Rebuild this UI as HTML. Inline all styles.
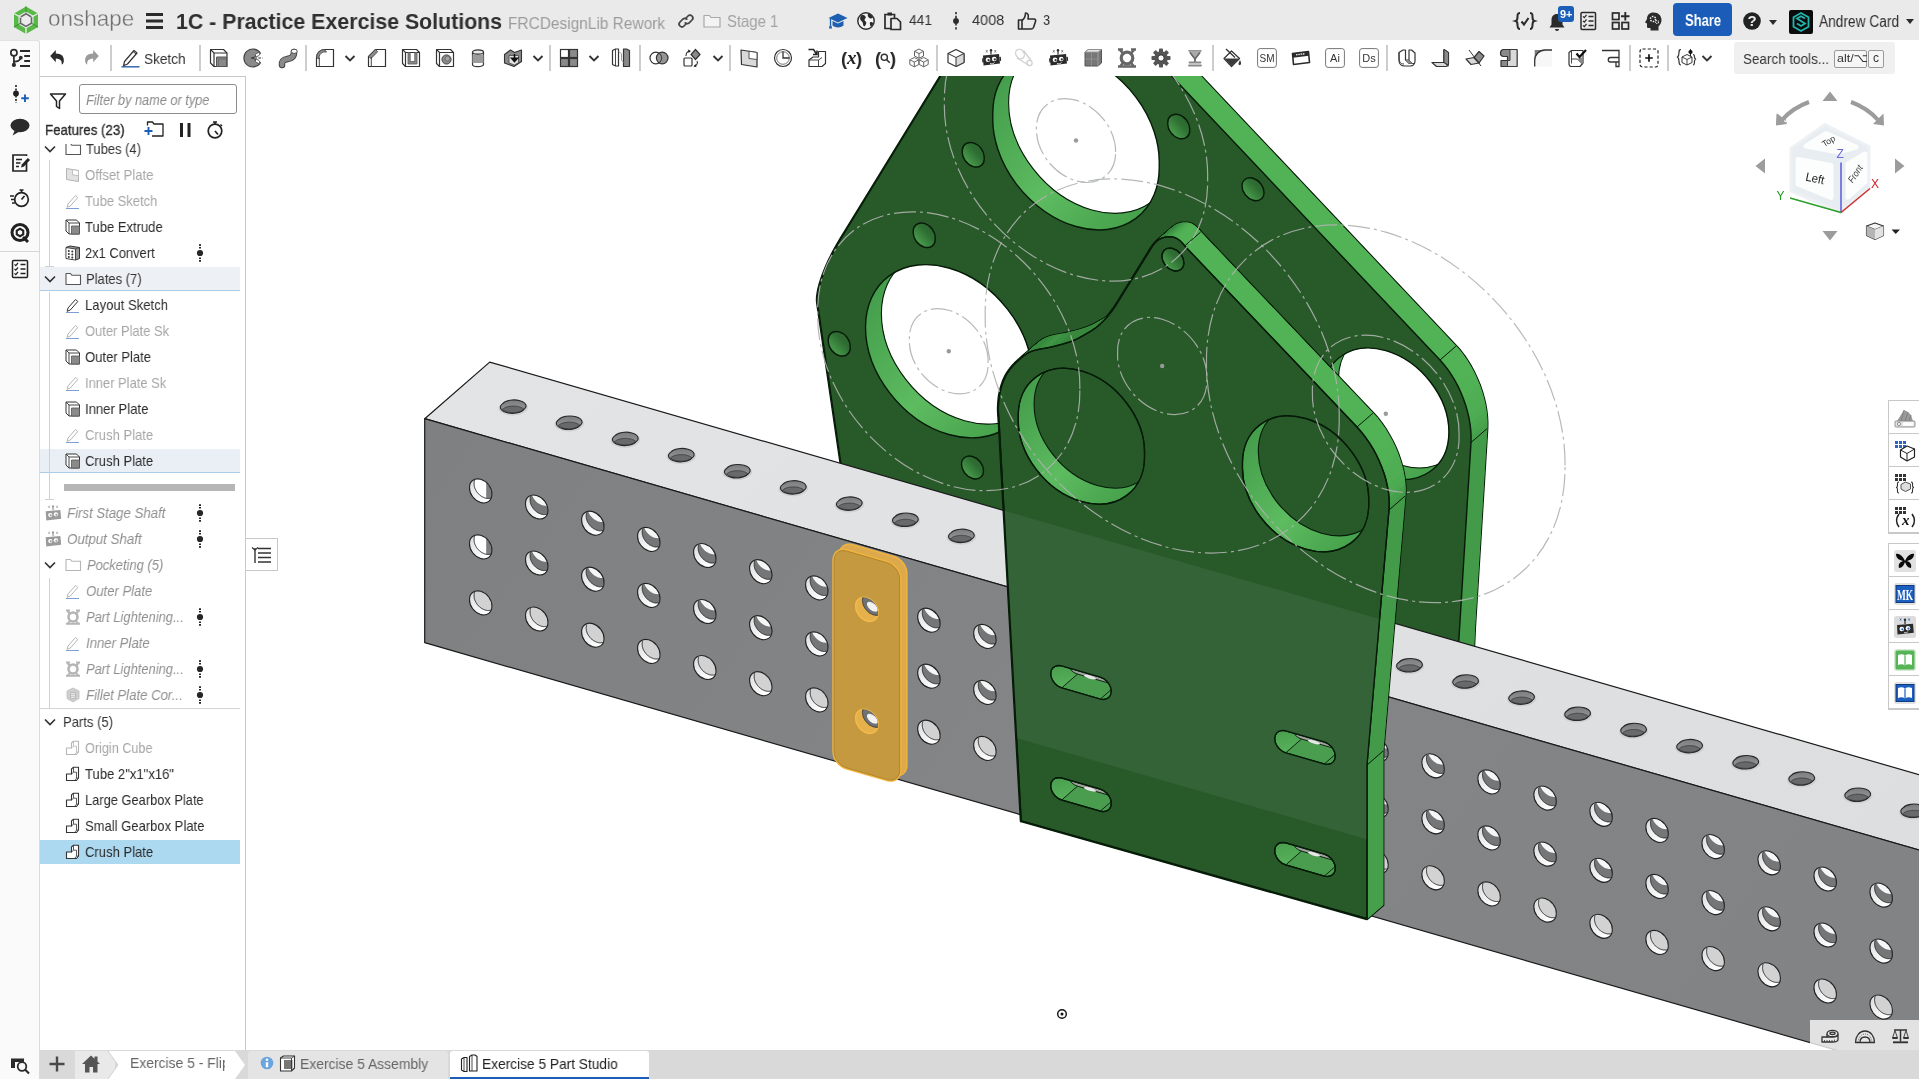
<!DOCTYPE html>
<html lang="en"><head><meta charset="utf-8"><title>Onshape - 1C - Practice Exercise Solutions</title>
<style>
*{box-sizing:border-box;margin:0;padding:0}
html,body{width:1919px;height:1079px;overflow:hidden;background:#fff;font-family:"Liberation Sans",sans-serif;color:#333}
#scene{position:absolute;left:0;top:0;z-index:1}
.abs{position:absolute}
#hdr{position:absolute;left:0;top:0;width:1919px;height:40px;background:#eaeaea;z-index:5}
#tb{position:absolute;left:40px;top:40px;width:1879px;height:36px;background:#fff;z-index:5}
#lcol{position:absolute;left:0;top:40px;width:40px;height:1039px;background:#fafafa;z-index:6;border-top-right-radius:3px;box-shadow:inset -1px 0 0 #dadada, inset 0 1px 0 #e2e2e2}
#panel{position:absolute;left:40px;top:76px;width:206px;height:974px;background:#fff;border-right:1px solid #c9c9c9;box-shadow:inset 0 1px 0 #c9c9c9;z-index:5}
#tabs{position:absolute;left:40px;top:1050px;width:1879px;height:29px;background:#d9d9d9;z-index:7}
.t{position:absolute;white-space:nowrap;line-height:1;transform-origin:0 50%;will-change:transform}
.row{position:absolute;left:0;width:200px;height:26px}
.row .t{top:6px;font-size:14.5px}
.g{color:#a3a3a3}
.i{font-style:italic;color:#8f8f8f}
svg{overflow:visible}
svg.abs{will-change:transform}
.ic{position:absolute;width:24px;height:24px}
</style></head><body>
<svg id="scene" width="1919" height="1079" viewBox="0 0 1919 1079">
<defs>
<linearGradient id="gw" x1="0" y1="0" x2="1" y2="1"><stop offset="0" stop-color="#3f9747"/><stop offset="0.55" stop-color="#5dbb60"/><stop offset="1" stop-color="#3f9a45"/></linearGradient>
<linearGradient id="gh" x1="0" y1="1" x2="1" y2="0"><stop offset="0" stop-color="#56b358"/><stop offset="0.6" stop-color="#2f6f33"/><stop offset="1" stop-color="#2a5e2c"/></linearGradient>
<linearGradient id="hw" x1="0" y1="0" x2="0.6" y2="1"><stop offset="0" stop-color="#d9d9d9"/><stop offset="1" stop-color="#ffffff"/></linearGradient>
<linearGradient id="th" x1="0" y1="0" x2="0" y2="1"><stop offset="0" stop-color="#7b7d7e"/><stop offset="1" stop-color="#9a9c9d"/></linearGradient>
<linearGradient id="tf" x1="0" y1="0" x2="1" y2="0.3"><stop offset="0" stop-color="#7e8081"/><stop offset="0.5" stop-color="#838586"/><stop offset="1" stop-color="#818384"/></linearGradient>
<linearGradient id="tt" x1="0" y1="0" x2="1" y2="0.3"><stop offset="0" stop-color="#e3e4e5"/><stop offset="1" stop-color="#dddedf"/></linearGradient>
<clipPath id="bp_h0"><path d="M1159.2,164.5 A96.11 72.08 -130.93 1 0 992.8,116.5 A96.11 72.08 -130.93 1 0 1159.2,164.5Z"/></clipPath>
<clipPath id="bp_h1"><path d="M1032.0,375.3 A96.11 72.08 -130.93 1 0 865.5,327.2 A96.11 72.08 -130.93 1 0 1032.0,375.3Z"/></clipPath>
<clipPath id="bp_h2"><path d="M1448.9,432.0 A72.89 54.67 -130.93 1 0 1322.6,395.5 A72.89 54.67 -130.93 1 0 1448.9,432.0Z"/></clipPath>
<g id="hA"><path d="M11.2,3.2 A12.94 9.70 -130.93 1 0 -11.2,-3.2 A12.94 9.70 -130.93 1 0 11.2,3.2Z" fill="url(#hw)"/><path d="M11.2 3.2 11.2 4.2 11.0 5.1 10.8 6.0 10.5 6.9 10.4 7.2 10.2 7.3 9.3 7.5 8.4 7.6 7.5 7.6 6.5 7.6 5.5 7.4 4.6 7.2 3.6 6.8 2.6 6.4 1.7 5.9 0.7 5.4 -0.2 4.7 -1.0 4.0 -1.9 3.3 -2.6 2.5 -3.4 1.6 -4.0 0.7 -4.6 -0.3 -5.1 -1.2 -5.6 -2.2 -6.0 -3.2 -6.3 -4.3 -6.5 -5.3 -6.6 -6.3 -6.6 -7.3 -6.6 -8.2 -6.5 -9.2 -6.3 -10.1 -6.0 -10.9 -5.8 -11.2 -5.6 -11.3 -4.7 -11.5 -3.8 -11.6 -2.9 -11.7 -1.9 -11.6 -1.0 -11.4 0.0 -11.2 1.0 -10.9 1.9 -10.5 2.9 -10.0 3.8 -9.4 4.7 -8.8 5.6 -8.1 6.4 -7.3 7.2 -6.5 7.9 -5.6 8.6 -4.7 9.2 -3.8 9.7 -2.8 10.2 -1.8 10.5 -0.8 10.8 0.2 11.0 1.2 11.2 2.2Z" fill="#747677"/><path d="M1.0 -10.9 1.9 -10.5 2.9 -10.0 3.8 -9.4 4.7 -8.8 5.6 -8.1 6.4 -7.3 7.2 -6.5 7.9 -5.6 8.6 -4.7 9.2 -3.8 9.7 -2.8 10.2 -1.8 10.3 -1.4 9.6 -1.3 8.7 -1.2 7.7 -1.3 6.8 -1.5 5.8 -1.7 4.8 -2.0 3.9 -2.4 2.9 -2.9 2.0 -3.5 1.1 -4.1 0.2 -4.8 -0.6 -5.6 -1.4 -6.4 -2.1 -7.3 -2.8 -8.2 -3.4 -9.1 -3.9 -10.1 -4.4 -11.1 -4.5 -11.5 -3.8 -11.6 -2.9 -11.7 -1.9 -11.6 -1.0 -11.4 0.0 -11.2Z" fill="#f6f6f6"/><path d="M10.2 7.3 9.7 7.4 9.3 7.5 8.9 7.5 8.4 7.6 7.9 7.6 7.5 7.6 7.0 7.6 6.5 7.6 6.0 7.5 5.5 7.4 5.1 7.3 4.6 7.2 4.1 7.0 3.6 6.8 3.1 6.6 2.6 6.4 2.1 6.2 1.7 5.9 1.2 5.7 0.7 5.4 0.3 5.1 -0.2 4.7 -0.6 4.4 -1.0 4.0 -1.5 3.7 -1.9 3.3 -2.3 2.9 -2.6 2.5 -3.0 2.0 -3.4 1.6 -3.7 1.1 -4.0 0.7 -4.3 0.2 -4.6 -0.3 -4.9 -0.7 -5.1 -1.2 -5.4 -1.7 -5.6 -2.2 -5.8 -2.7 -6.0 -3.2 -6.1 -3.8 -6.3 -4.3 -6.4 -4.8 -6.5 -5.3 -6.5 -5.8 -6.6 -6.3 -6.6 -6.8 -6.6 -7.3 -6.6 -7.8 -6.6 -8.2 -6.5 -8.7 -6.5 -9.2 -6.4 -9.6 -6.3 -10.1 -6.1 -10.5 -6.0 -10.9" fill="none" stroke="#2a2a2a" stroke-width="1"/><path d="M11.2,3.2 A12.94 9.70 -130.93 1 0 -11.2,-3.2 A12.94 9.70 -130.93 1 0 11.2,3.2Z" fill="none" stroke="#222" stroke-width="1.1"/></g>
<g id="hB"><path d="M11.2,3.2 A12.94 9.70 -130.93 1 0 -11.2,-3.2 A12.94 9.70 -130.93 1 0 11.2,3.2Z" fill="url(#hw)"/><path d="M11.2 3.2 11.2 4.2 11.0 5.1 10.8 6.0 10.5 6.9 10.4 7.2 10.2 7.3 9.3 7.5 8.4 7.6 7.5 7.6 6.5 7.6 5.5 7.4 4.6 7.2 3.6 6.8 2.6 6.4 1.7 5.9 0.7 5.4 -0.2 4.7 -1.0 4.0 -1.9 3.3 -2.6 2.5 -3.4 1.6 -4.0 0.7 -4.6 -0.3 -5.1 -1.2 -5.6 -2.2 -6.0 -3.2 -6.3 -4.3 -6.5 -5.3 -6.6 -6.3 -6.6 -7.3 -6.6 -8.2 -6.5 -9.2 -6.3 -10.1 -6.0 -10.9 -5.8 -11.2 -5.6 -11.3 -4.7 -11.5 -3.8 -11.6 -2.9 -11.7 -1.9 -11.6 -1.0 -11.4 0.0 -11.2 1.0 -10.9 1.9 -10.5 2.9 -10.0 3.8 -9.4 4.7 -8.8 5.6 -8.1 6.4 -7.3 7.2 -6.5 7.9 -5.6 8.6 -4.7 9.2 -3.8 9.7 -2.8 10.2 -1.8 10.5 -0.8 10.8 0.2 11.0 1.2 11.2 2.2Z" fill="#d2d2d2"/><path d="M10.2 7.3 9.7 7.4 9.3 7.5 8.9 7.5 8.4 7.6 7.9 7.6 7.5 7.6 7.0 7.6 6.5 7.6 6.0 7.5 5.5 7.4 5.1 7.3 4.6 7.2 4.1 7.0 3.6 6.8 3.1 6.6 2.6 6.4 2.1 6.2 1.7 5.9 1.2 5.7 0.7 5.4 0.3 5.1 -0.2 4.7 -0.6 4.4 -1.0 4.0 -1.5 3.7 -1.9 3.3 -2.3 2.9 -2.6 2.5 -3.0 2.0 -3.4 1.6 -3.7 1.1 -4.0 0.7 -4.3 0.2 -4.6 -0.3 -4.9 -0.7 -5.1 -1.2 -5.4 -1.7 -5.6 -2.2 -5.8 -2.7 -6.0 -3.2 -6.1 -3.8 -6.3 -4.3 -6.4 -4.8 -6.5 -5.3 -6.5 -5.8 -6.6 -6.3 -6.6 -6.8 -6.6 -7.3 -6.6 -7.8 -6.6 -8.2 -6.5 -8.7 -6.5 -9.2 -6.4 -9.6 -6.3 -10.1 -6.1 -10.5 -6.0 -10.9" fill="none" stroke="#2a2a2a" stroke-width="1"/><path d="M11.2,3.2 A12.94 9.70 -130.93 1 0 -11.2,-3.2 A12.94 9.70 -130.93 1 0 11.2,3.2Z" fill="none" stroke="#222" stroke-width="1.1"/></g>
<g id="hC"><path d="M11.2,3.2 A12.94 9.70 -130.93 1 0 -11.2,-3.2 A12.94 9.70 -130.93 1 0 11.2,3.2Z" fill="url(#hw)"/><path d="M11.2 3.2 11.2 4.2 11.0 5.1 10.8 6.0 10.5 6.9 10.4 7.2 10.2 7.3 9.3 7.5 8.4 7.6 7.5 7.6 6.5 7.6 5.5 7.4 4.6 7.2 3.6 6.8 2.6 6.4 1.7 5.9 0.7 5.4 -0.2 4.7 -1.0 4.0 -1.9 3.3 -2.6 2.5 -3.4 1.6 -4.0 0.7 -4.6 -0.3 -5.1 -1.2 -5.6 -2.2 -6.0 -3.2 -6.3 -4.3 -6.5 -5.3 -6.6 -6.3 -6.6 -7.3 -6.6 -8.2 -6.5 -9.2 -6.3 -10.1 -6.0 -10.9 -5.8 -11.2 -5.6 -11.3 -4.7 -11.5 -3.8 -11.6 -2.9 -11.7 -1.9 -11.6 -1.0 -11.4 0.0 -11.2 1.0 -10.9 1.9 -10.5 2.9 -10.0 3.8 -9.4 4.7 -8.8 5.6 -8.1 6.4 -7.3 7.2 -6.5 7.9 -5.6 8.6 -4.7 9.2 -3.8 9.7 -2.8 10.2 -1.8 10.5 -0.8 10.8 0.2 11.0 1.2 11.2 2.2Z" fill="#ffffff"/><path d="M10.5 6.9 10.4 7.2 10.2 7.3 9.3 7.5 8.4 7.6 7.5 7.6 6.5 7.6 5.5 7.4 5.5 7.4 5.5 -8.2 5.6 -8.1 6.4 -7.3 7.2 -6.5 7.9 -5.6 8.6 -4.7 9.2 -3.8 9.7 -2.8 10.2 -1.8 10.5 -0.8 10.8 0.2 11.0 1.2 11.2 2.2 11.2 3.2 11.2 4.2 11.0 5.1 10.8 6.0Z" fill="#7b7d7e"/><path d="M10.2 7.3 9.7 7.4 9.3 7.5 8.9 7.5 8.4 7.6 7.9 7.6 7.5 7.6 7.0 7.6 6.5 7.6 6.0 7.5 5.5 7.4 5.1 7.3 4.6 7.2 4.1 7.0 3.6 6.8 3.1 6.6 2.6 6.4 2.1 6.2 1.7 5.9 1.2 5.7 0.7 5.4 0.3 5.1 -0.2 4.7 -0.6 4.4 -1.0 4.0 -1.5 3.7 -1.9 3.3 -2.3 2.9 -2.6 2.5 -3.0 2.0 -3.4 1.6 -3.7 1.1 -4.0 0.7 -4.3 0.2 -4.6 -0.3 -4.9 -0.7 -5.1 -1.2 -5.4 -1.7 -5.6 -2.2 -5.8 -2.7 -6.0 -3.2 -6.1 -3.8 -6.3 -4.3 -6.4 -4.8 -6.5 -5.3 -6.5 -5.8 -6.6 -6.3 -6.6 -6.8 -6.6 -7.3 -6.6 -7.8 -6.6 -8.2 -6.5 -8.7 -6.5 -9.2 -6.4 -9.6 -6.3 -10.1 -6.1 -10.5 -6.0 -10.9" fill="none" stroke="#2a2a2a" stroke-width="1"/><path d="M11.2,3.2 A12.94 9.70 -130.93 1 0 -11.2,-3.2 A12.94 9.70 -130.93 1 0 11.2,3.2Z" fill="none" stroke="#222" stroke-width="1.1"/></g>
<g id="hT"><path d="M12.4,3.6 A14.38 7.24 179.75 1 0 -12.4,-3.6 A14.38 7.24 179.75 1 0 12.4,3.6Z" fill="#cfd0d1" transform="translate(0,1.2)"/><path d="M10.5,3.0 A12.18 6.13 179.75 1 0 -10.5,-3.0 A12.18 6.13 179.75 1 0 10.5,3.0Z" fill="url(#th)"/><path d="M-7.8 0.9 -8.6 1.3 -9.3 1.7 -10.0 2.1 -10.5 2.6 -10.8 2.8 -10.6 3.1 -10.0 3.5 -9.3 4.0 -8.6 4.4 -7.8 4.7 -7.0 5.0 -6.1 5.3 -5.2 5.6 -4.2 5.8 -3.2 5.9 -2.1 6.0 -1.1 6.1 -0.0 6.1 1.0 6.1 2.1 6.0 3.1 5.9 4.1 5.7 5.1 5.5 6.1 5.3 7.0 5.0 7.8 4.7 8.6 4.3 9.3 3.9 10.0 3.5 10.5 3.0 10.8 2.8 10.6 2.5 10.0 2.1 9.3 1.6 8.6 1.2 7.8 0.9 7.0 0.6 6.1 0.3 5.2 0.0 4.2 -0.2 3.2 -0.3 2.1 -0.4 1.1 -0.5 0.0 -0.5 -1.0 -0.5 -2.1 -0.4 -3.1 -0.3 -4.1 -0.1 -5.1 0.1 -6.1 0.3 -7.0 0.6Z" fill="#67696a" stroke="#3a3a3a" stroke-width="0.8"/><path d="M10.5,3.0 A12.18 6.13 179.75 1 0 -10.5,-3.0 A12.18 6.13 179.75 1 0 10.5,3.0Z" fill="none" stroke="#2a2a2a" stroke-width="1.1"/></g>
<clipPath id="ch0"><path d="M878.1,612.5 A12.94 9.70 -130.93 1 0 855.7,606.1 A12.94 9.70 -130.93 1 0 878.1,612.5Z"/></clipPath>
<clipPath id="ch2"><path d="M878.1,724.5 A12.94 9.70 -130.93 1 0 855.7,718.1 A12.94 9.70 -130.93 1 0 878.1,724.5Z"/></clipPath>
<clipPath id="sp_h0"><path d="M1144.5,454.4 A72.89 54.67 -130.93 1 0 1018.3,418.0 A72.89 54.67 -130.93 1 0 1144.5,454.4Z"/></clipPath>
<clipPath id="sp_h1"><path d="M1368.7,502.0 A72.89 54.67 -130.93 1 0 1242.5,465.6 A72.89 54.67 -130.93 1 0 1368.7,502.0Z"/></clipPath>
<linearGradient id="sg" x1="0" y1="0" x2="0.3" y2="1"><stop offset="0" stop-color="#469a4b"/><stop offset="1" stop-color="#5cb85f"/></linearGradient>
<clipPath id="sl0"><path d="M1100.3,677.1 L1103.7,678.6 L1106.8,681.1 L1109.2,684.2 L1110.8,687.7 L1111.3,691.2 L1110.8,694.5 L1109.2,697.1 L1106.8,698.8 L1103.7,699.5 L1100.3,699.1 L1061.7,687.9 L1058.3,686.4 L1055.2,683.9 L1052.8,680.8 L1051.2,677.3 L1050.7,673.8 L1051.2,670.5 L1052.8,667.9 L1055.2,666.2 L1058.3,665.5 L1061.7,665.9Z"/></clipPath>
<clipPath id="sl1"><path d="M1324.3,742.0 L1327.7,743.5 L1330.8,746.0 L1333.2,749.1 L1334.8,752.6 L1335.3,756.1 L1334.8,759.4 L1333.2,762.0 L1330.8,763.7 L1327.7,764.4 L1324.3,764.0 L1285.7,752.8 L1282.3,751.3 L1279.2,748.8 L1276.8,745.7 L1275.2,742.2 L1274.7,738.7 L1275.2,735.4 L1276.8,732.8 L1279.2,731.1 L1282.3,730.4 L1285.7,730.8Z"/></clipPath>
<clipPath id="sl2"><path d="M1100.3,789.2 L1103.7,790.7 L1106.8,793.2 L1109.2,796.3 L1110.8,799.8 L1111.3,803.3 L1110.8,806.6 L1109.2,809.2 L1106.8,810.9 L1103.7,811.6 L1100.3,811.2 L1061.7,800.0 L1058.3,798.5 L1055.2,796.0 L1052.8,792.9 L1051.2,789.4 L1050.7,785.9 L1051.2,782.6 L1052.8,780.0 L1055.2,778.3 L1058.3,777.6 L1061.7,778.0Z"/></clipPath>
<clipPath id="sl3"><path d="M1324.3,854.1 L1327.7,855.6 L1330.8,858.1 L1333.2,861.2 L1334.8,864.7 L1335.3,868.2 L1334.8,871.5 L1333.2,874.1 L1330.8,875.8 L1327.7,876.5 L1324.3,876.1 L1285.7,864.9 L1282.3,863.4 L1279.2,860.9 L1276.8,857.8 L1275.2,854.3 L1274.7,850.8 L1275.2,847.5 L1276.8,844.9 L1279.2,843.2 L1282.3,842.5 L1285.7,842.9Z"/></clipPath>
<clipPath id="spface"><path d="M999.2,424.0 L999.0,421.1 L998.7,417.0 L998.4,412.3 L998.3,408.0 L998.5,404.1 L998.8,400.2 L999.2,396.4 L999.9,392.7 L1000.8,389.0 L1001.9,385.2 L1003.1,381.7 L1004.5,378.4 L1005.9,375.5 L1007.5,372.9 L1009.2,370.4 L1011.0,368.0 L1013.1,365.6 L1015.3,363.2 L1017.7,361.0 L1020.0,358.9 L1022.2,357.0 L1024.5,355.3 L1026.7,353.7 L1029.1,352.4 L1031.6,351.3 L1034.2,350.5 L1036.9,349.8 L1039.5,349.2 L1042.0,348.7 L1044.5,348.3 L1047.1,347.8 L1049.9,347.3 L1053.0,346.6 L1056.2,345.8 L1059.6,344.9 L1062.9,344.0 L1066.1,343.0 L1069.4,342.0 L1072.6,340.8 L1075.8,339.5 L1079.3,337.7 L1083.1,335.6 L1086.5,333.7 L1088.8,332.3 L1090.9,331.1 L1093.0,329.7 L1095.2,328.2 L1097.4,326.5 L1099.6,324.6 L1101.8,322.5 L1104.0,320.3 L1106.3,317.9 L1108.5,315.3 L1110.7,312.5 L1113.0,309.5 L1115.2,306.4 L1117.3,303.0 L1119.5,299.5 L1151.5,247.6 L1152.5,246.1 L1153.5,244.8 L1154.5,243.6 L1155.5,242.4 L1156.6,241.4 L1157.7,240.5 L1158.8,239.7 L1160.0,239.0 L1161.2,238.4 L1162.5,237.9 L1163.8,237.5 L1165.1,237.2 L1166.5,236.9 L1168.0,236.8 L1169.7,236.7 L1171.2,236.8 L1172.7,237.0 L1174.2,237.4 L1175.5,237.9 L1176.8,238.5 L1178.0,239.2 L1179.1,240.0 L1180.2,240.9 L1181.2,241.8 L1182.1,242.8 L1183.0,243.8 L1183.9,244.9 L1184.7,245.9 L1357.0,427.0 L1361.4,432.0 L1365.5,437.3 L1369.4,442.8 L1373.0,448.7 L1376.3,454.7 L1379.2,460.9 L1381.8,467.2 L1384.1,473.5 L1386.0,479.8 L1387.4,486.1 L1388.5,492.3 L1389.1,498.4 L1389.3,504.3 L1389.0,510.0 L1367.0,765.0 L1367.0,918.7 L1021.2,820.9Z M1144.5,454.4 A72.89 54.67 -130.93 1 0 1018.3,418.0 A72.89 54.67 -130.93 1 0 1144.5,454.4Z M1368.7,502.0 A72.89 54.67 -130.93 1 0 1242.5,465.6 A72.89 54.67 -130.93 1 0 1368.7,502.0Z M1183.9,262.7 A12.68 9.51 -130.93 1 0 1161.9,256.3 A12.68 9.51 -130.93 1 0 1183.9,262.7Z M1100.3,677.1 L1103.7,678.6 L1106.8,681.1 L1109.2,684.2 L1110.8,687.7 L1111.3,691.2 L1110.8,694.5 L1109.2,697.1 L1106.8,698.8 L1103.7,699.5 L1100.3,699.1 L1061.7,687.9 L1058.3,686.4 L1055.2,683.9 L1052.8,680.8 L1051.2,677.3 L1050.7,673.8 L1051.2,670.5 L1052.8,667.9 L1055.2,666.2 L1058.3,665.5 L1061.7,665.9Z M1324.3,742.0 L1327.7,743.5 L1330.8,746.0 L1333.2,749.1 L1334.8,752.6 L1335.3,756.1 L1334.8,759.4 L1333.2,762.0 L1330.8,763.7 L1327.7,764.4 L1324.3,764.0 L1285.7,752.8 L1282.3,751.3 L1279.2,748.8 L1276.8,745.7 L1275.2,742.2 L1274.7,738.7 L1275.2,735.4 L1276.8,732.8 L1279.2,731.1 L1282.3,730.4 L1285.7,730.8Z M1100.3,789.2 L1103.7,790.7 L1106.8,793.2 L1109.2,796.3 L1110.8,799.8 L1111.3,803.3 L1110.8,806.6 L1109.2,809.2 L1106.8,810.9 L1103.7,811.6 L1100.3,811.2 L1061.7,800.0 L1058.3,798.5 L1055.2,796.0 L1052.8,792.9 L1051.2,789.4 L1050.7,785.9 L1051.2,782.6 L1052.8,780.0 L1055.2,778.3 L1058.3,777.6 L1061.7,778.0Z M1324.3,854.1 L1327.7,855.6 L1330.8,858.1 L1333.2,861.2 L1334.8,864.7 L1335.3,868.2 L1334.8,871.5 L1333.2,874.1 L1330.8,875.8 L1327.7,876.5 L1324.3,876.1 L1285.7,864.9 L1282.3,863.4 L1279.2,860.9 L1276.8,857.8 L1275.2,854.3 L1274.7,850.8 L1275.2,847.5 L1276.8,844.9 L1279.2,843.2 L1282.3,842.5 L1285.7,842.9Z" clip-rule="evenodd"/></clipPath>
</defs>
<g id="bigplate">
<path d="M1119.4,-9.8 L1455.9,346.2 L1460.0,350.8 L1463.9,355.9 L1467.5,361.3 L1470.9,366.9 L1474.0,372.8 L1476.8,378.9 L1479.4,385.1 L1481.6,391.4 L1483.4,397.8 L1484.9,404.1 L1486.0,410.5 L1486.7,416.7 L1487.0,422.8 L1486.9,428.7 L1474.6,627.2 L1471.9,686.2 L861.9,506.2 L856.9,450.2 L833.4,289.2 L833.1,286.3 L833.3,283.1 L833.7,279.4 L834.5,275.5 L835.6,271.2 L837.0,266.6 L838.6,261.8 L840.5,256.8 L842.7,251.6 L845.1,246.3 L847.7,241.0 L850.6,235.5 L853.6,230.1 L856.9,224.7 L1000.9,-9.8Z M1000.9,-9.8 L856.9,224.7 L841.0,238.5 L985.0,4.0Z M856.9,224.7 L853.6,230.1 L837.8,243.9 L841.0,238.5Z M853.6,230.1 L850.6,235.5 L834.7,249.4 L837.8,243.9Z M850.6,235.5 L847.7,241.0 L831.9,254.8 L834.7,249.4Z M847.7,241.0 L845.1,246.3 L829.2,260.2 L831.9,254.8Z M845.1,246.3 L842.7,251.6 L826.8,265.4 L829.2,260.2Z M842.7,251.6 L840.5,256.8 L824.7,270.6 L826.8,265.4Z M840.5,256.8 L838.6,261.8 L822.7,275.6 L824.7,270.6Z M838.6,261.8 L837.0,266.6 L821.1,280.4 L822.7,275.6Z M837.0,266.6 L835.6,271.2 L819.7,285.0 L821.1,280.4Z M835.6,271.2 L834.5,275.5 L818.6,289.3 L819.7,285.0Z M834.5,275.5 L833.7,279.4 L817.9,293.3 L818.6,289.3Z M833.7,279.4 L833.3,283.1 L817.4,296.9 L817.9,293.3Z M833.3,283.1 L833.1,286.3 L817.3,300.2 L817.4,296.9Z M833.1,286.3 L833.4,289.2 L817.5,303.0 L817.3,300.2Z M833.4,289.2 L856.9,450.2 L841.0,464.0 L817.5,303.0Z M856.9,450.2 L861.9,506.2 L846.0,520.0 L841.0,464.0Z M861.9,506.2 L1471.9,686.2 L1456.0,700.0 L846.0,520.0Z M1456.0,700.0 L1458.8,641.0 L1474.6,627.2 L1471.9,686.2Z M1458.8,641.0 L1471.0,442.5 L1486.9,428.7 L1474.6,627.2Z M1471.0,442.5 L1471.1,436.6 L1487.0,422.8 L1486.9,428.7Z M1471.1,436.6 L1470.8,430.5 L1486.7,416.7 L1487.0,422.8Z M1470.8,430.5 L1470.1,424.3 L1486.0,410.5 L1486.7,416.7Z M1470.1,424.3 L1469.0,417.9 L1484.9,404.1 L1486.0,410.5Z M1469.0,417.9 L1467.5,411.6 L1483.4,397.8 L1484.9,404.1Z M1467.5,411.6 L1465.7,405.2 L1481.6,391.4 L1483.4,397.8Z M1465.7,405.2 L1463.5,398.9 L1479.4,385.1 L1481.6,391.4Z M1463.5,398.9 L1461.0,392.7 L1476.8,378.9 L1479.4,385.1Z M1461.0,392.7 L1458.2,386.6 L1474.0,372.8 L1476.8,378.9Z M1458.2,386.6 L1455.0,380.7 L1470.9,366.9 L1474.0,372.8Z M1455.0,380.7 L1451.6,375.1 L1467.5,361.3 L1470.9,366.9Z M1451.6,375.1 L1448.0,369.7 L1463.9,355.9 L1467.5,361.3Z M1448.0,369.7 L1444.1,364.7 L1460.0,350.8 L1463.9,355.9Z M1444.1,364.7 L1440.0,360.0 L1455.9,346.2 L1460.0,350.8Z M1440.0,360.0 L1103.5,4.0 L1119.4,-9.8 L1455.9,346.2Z M1103.5,4.0 L985.0,4.0 L1000.9,-9.8 L1119.4,-9.8Z" fill="#061a08" stroke="#061a08" stroke-width="3" stroke-linejoin="round"/>
<path d="M1119.4,-9.8 L1455.9,346.2 L1460.0,350.8 L1463.9,355.9 L1467.5,361.3 L1470.9,366.9 L1474.0,372.8 L1476.8,378.9 L1479.4,385.1 L1481.6,391.4 L1483.4,397.8 L1484.9,404.1 L1486.0,410.5 L1486.7,416.7 L1487.0,422.8 L1486.9,428.7 L1474.6,627.2 L1471.9,686.2 L861.9,506.2 L856.9,450.2 L833.4,289.2 L833.1,286.3 L833.3,283.1 L833.7,279.4 L834.5,275.5 L835.6,271.2 L837.0,266.6 L838.6,261.8 L840.5,256.8 L842.7,251.6 L845.1,246.3 L847.7,241.0 L850.6,235.5 L853.6,230.1 L856.9,224.7 L1000.9,-9.8Z M1000.9,-9.8 L856.9,224.7 L841.0,238.5 L985.0,4.0Z M856.9,224.7 L853.6,230.1 L837.8,243.9 L841.0,238.5Z M853.6,230.1 L850.6,235.5 L834.7,249.4 L837.8,243.9Z M850.6,235.5 L847.7,241.0 L831.9,254.8 L834.7,249.4Z M847.7,241.0 L845.1,246.3 L829.2,260.2 L831.9,254.8Z M845.1,246.3 L842.7,251.6 L826.8,265.4 L829.2,260.2Z M842.7,251.6 L840.5,256.8 L824.7,270.6 L826.8,265.4Z M840.5,256.8 L838.6,261.8 L822.7,275.6 L824.7,270.6Z M838.6,261.8 L837.0,266.6 L821.1,280.4 L822.7,275.6Z M837.0,266.6 L835.6,271.2 L819.7,285.0 L821.1,280.4Z M835.6,271.2 L834.5,275.5 L818.6,289.3 L819.7,285.0Z M834.5,275.5 L833.7,279.4 L817.9,293.3 L818.6,289.3Z M833.7,279.4 L833.3,283.1 L817.4,296.9 L817.9,293.3Z M833.3,283.1 L833.1,286.3 L817.3,300.2 L817.4,296.9Z M833.1,286.3 L833.4,289.2 L817.5,303.0 L817.3,300.2Z M833.4,289.2 L856.9,450.2 L841.0,464.0 L817.5,303.0Z M856.9,450.2 L861.9,506.2 L846.0,520.0 L841.0,464.0Z M861.9,506.2 L1471.9,686.2 L1456.0,700.0 L846.0,520.0Z M1456.0,700.0 L1458.8,641.0 L1474.6,627.2 L1471.9,686.2Z M1458.8,641.0 L1471.0,442.5 L1486.9,428.7 L1474.6,627.2Z M1471.0,442.5 L1471.1,436.6 L1487.0,422.8 L1486.9,428.7Z M1471.1,436.6 L1470.8,430.5 L1486.7,416.7 L1487.0,422.8Z M1470.8,430.5 L1470.1,424.3 L1486.0,410.5 L1486.7,416.7Z M1470.1,424.3 L1469.0,417.9 L1484.9,404.1 L1486.0,410.5Z M1469.0,417.9 L1467.5,411.6 L1483.4,397.8 L1484.9,404.1Z M1467.5,411.6 L1465.7,405.2 L1481.6,391.4 L1483.4,397.8Z M1465.7,405.2 L1463.5,398.9 L1479.4,385.1 L1481.6,391.4Z M1463.5,398.9 L1461.0,392.7 L1476.8,378.9 L1479.4,385.1Z M1461.0,392.7 L1458.2,386.6 L1474.0,372.8 L1476.8,378.9Z M1458.2,386.6 L1455.0,380.7 L1470.9,366.9 L1474.0,372.8Z M1455.0,380.7 L1451.6,375.1 L1467.5,361.3 L1470.9,366.9Z M1451.6,375.1 L1448.0,369.7 L1463.9,355.9 L1467.5,361.3Z M1448.0,369.7 L1444.1,364.7 L1460.0,350.8 L1463.9,355.9Z M1444.1,364.7 L1440.0,360.0 L1455.9,346.2 L1460.0,350.8Z M1440.0,360.0 L1103.5,4.0 L1119.4,-9.8 L1455.9,346.2Z M1103.5,4.0 L985.0,4.0 L1000.9,-9.8 L1119.4,-9.8Z" fill="#51b055" stroke="#51b055" stroke-width="0.5" stroke-linejoin="round"/>
<path d="M1119.4,-9.8 L1455.9,346.2 L1440.0,360.0 L1103.5,4.0Z M1455.9,346.2 L1460.0,350.8 L1444.1,364.7 L1440.0,360.0Z M1460.0,350.8 L1463.9,355.9 L1448.0,369.7 L1444.1,364.7Z M1463.9,355.9 L1467.5,361.3 L1451.6,375.1 L1448.0,369.7Z M1467.5,361.3 L1470.9,366.9 L1455.0,380.7 L1451.6,375.1Z M1470.9,366.9 L1474.0,372.8 L1458.2,386.6 L1455.0,380.7Z" fill="#52b256" stroke="#52b256" stroke-width="0.6" stroke-linejoin="round"/>
<path d="M1474.0,372.8 L1476.8,378.9 L1461.0,392.7 L1458.2,386.6Z M1476.8,378.9 L1479.4,385.1 L1463.5,398.9 L1461.0,392.7Z" fill="#51b155" stroke="#51b155" stroke-width="0.6" stroke-linejoin="round"/>
<path d="M1479.4,385.1 L1481.6,391.4 L1465.7,405.2 L1463.5,398.9Z" fill="#50af54" stroke="#50af54" stroke-width="0.6" stroke-linejoin="round"/>
<path d="M1481.6,391.4 L1483.4,397.8 L1467.5,411.6 L1465.7,405.2Z M1483.4,397.8 L1484.9,404.1 L1469.0,417.9 L1467.5,411.6Z" fill="#4fad53" stroke="#4fad53" stroke-width="0.6" stroke-linejoin="round"/>
<path d="M1484.9,404.1 L1486.0,410.5 L1470.1,424.3 L1469.0,417.9Z" fill="#4dab52" stroke="#4dab52" stroke-width="0.6" stroke-linejoin="round"/>
<path d="M1486.0,410.5 L1486.7,416.7 L1470.8,430.5 L1470.1,424.3Z" fill="#4ba850" stroke="#4ba850" stroke-width="0.6" stroke-linejoin="round"/>
<path d="M1486.7,416.7 L1487.0,422.8 L1471.1,436.6 L1470.8,430.5Z" fill="#49a44d" stroke="#49a44d" stroke-width="0.6" stroke-linejoin="round"/>
<path d="M1487.0,422.8 L1486.9,428.7 L1471.0,442.5 L1471.1,436.6Z M1000.9,-9.8 L1119.4,-9.8 L1103.5,4.0 L985.0,4.0Z" fill="#469f4b" stroke="#469f4b" stroke-width="0.6" stroke-linejoin="round"/>
<path d="M1486.9,428.7 L1474.6,627.2 L1458.8,641.0 L1471.0,442.5Z M1474.6,627.2 L1471.9,686.2 L1456.0,700.0 L1458.8,641.0Z" fill="#439a48" stroke="#439a48" stroke-width="0.6" stroke-linejoin="round"/>
<path d="M1159.2,164.5 A96.11 72.08 -130.93 1 0 992.8,116.5 A96.11 72.08 -130.93 1 0 1159.2,164.5Z" fill="url(#gw)"/>
<path d="M1175.1,150.7 A96.11 72.08 -130.93 1 0 1008.6,102.7 A96.11 72.08 -130.93 1 0 1175.1,150.7Z" fill="#ffffff" stroke="#061a08" stroke-width="1.1" clip-path="url(#bp_h0)"/>
<path d="M1032.0,375.3 A96.11 72.08 -130.93 1 0 865.5,327.2 A96.11 72.08 -130.93 1 0 1032.0,375.3Z" fill="url(#gw)"/>
<path d="M1047.9,361.5 A96.11 72.08 -130.93 1 0 881.4,313.4 A96.11 72.08 -130.93 1 0 1047.9,361.5Z" fill="#ffffff" stroke="#061a08" stroke-width="1.1" clip-path="url(#bp_h1)"/>
<path d="M1448.9,432.0 A72.89 54.67 -130.93 1 0 1322.6,395.5 A72.89 54.67 -130.93 1 0 1448.9,432.0Z" fill="url(#gw)"/>
<path d="M1464.7,418.2 A72.89 54.67 -130.93 1 0 1338.5,381.7 A72.89 54.67 -130.93 1 0 1464.7,418.2Z" fill="#ffffff" stroke="#061a08" stroke-width="1.1" clip-path="url(#bp_h2)"/>
<path d="M984.2,157.9 A12.68 9.51 -130.93 1 0 962.3,151.6 A12.68 9.51 -130.93 1 0 984.2,157.9Z" fill="url(#gh)"/>
<path d="M1189.7,129.7 A12.68 9.51 -130.93 1 0 1167.8,123.3 A12.68 9.51 -130.93 1 0 1189.7,129.7Z" fill="url(#gh)"/>
<path d="M1264.0,192.4 A12.68 9.51 -130.93 1 0 1242.0,186.1 A12.68 9.51 -130.93 1 0 1264.0,192.4Z" fill="url(#gh)"/>
<path d="M935.2,238.4 A12.68 9.51 -130.93 1 0 913.3,232.1 A12.68 9.51 -130.93 1 0 935.2,238.4Z" fill="url(#gh)"/>
<path d="M850.2,346.9 A12.68 9.51 -130.93 1 0 828.3,340.6 A12.68 9.51 -130.93 1 0 850.2,346.9Z" fill="url(#gh)"/>
<path d="M983.5,470.7 A12.68 9.51 -130.93 1 0 961.5,464.3 A12.68 9.51 -130.93 1 0 983.5,470.7Z" fill="url(#gh)"/>
<path d="M985.0,4.0 L841.0,238.5 L837.8,243.9 L834.7,249.4 L831.9,254.8 L829.2,260.2 L826.8,265.4 L824.7,270.6 L822.7,275.6 L821.1,280.4 L819.7,285.0 L818.6,289.3 L817.9,293.3 L817.4,296.9 L817.3,300.2 L817.5,303.0 L841.0,464.0 L846.0,520.0 L1456.0,700.0 L1458.8,641.0 L1471.0,442.5 L1471.1,436.6 L1470.8,430.5 L1470.1,424.3 L1469.0,417.9 L1467.5,411.6 L1465.7,405.2 L1463.5,398.9 L1461.0,392.7 L1458.2,386.6 L1455.0,380.7 L1451.6,375.1 L1448.0,369.7 L1444.1,364.7 L1440.0,360.0 L1103.5,4.0Z M1159.2,164.5 A96.11 72.08 -130.93 1 0 992.8,116.5 A96.11 72.08 -130.93 1 0 1159.2,164.5Z M1032.0,375.3 A96.11 72.08 -130.93 1 0 865.5,327.2 A96.11 72.08 -130.93 1 0 1032.0,375.3Z M1448.9,432.0 A72.89 54.67 -130.93 1 0 1322.6,395.5 A72.89 54.67 -130.93 1 0 1448.9,432.0Z M984.2,157.9 A12.68 9.51 -130.93 1 0 962.3,151.6 A12.68 9.51 -130.93 1 0 984.2,157.9Z M1189.7,129.7 A12.68 9.51 -130.93 1 0 1167.8,123.3 A12.68 9.51 -130.93 1 0 1189.7,129.7Z M1264.0,192.4 A12.68 9.51 -130.93 1 0 1242.0,186.1 A12.68 9.51 -130.93 1 0 1264.0,192.4Z M935.2,238.4 A12.68 9.51 -130.93 1 0 913.3,232.1 A12.68 9.51 -130.93 1 0 935.2,238.4Z M850.2,346.9 A12.68 9.51 -130.93 1 0 828.3,340.6 A12.68 9.51 -130.93 1 0 850.2,346.9Z M983.5,470.7 A12.68 9.51 -130.93 1 0 961.5,464.3 A12.68 9.51 -130.93 1 0 983.5,470.7Z" fill="#275929" fill-rule="evenodd" stroke="#061a08" stroke-width="1.4" stroke-linejoin="round"/>
<path d="M1440.0,360.0 L1455.9,346.2" stroke="#061a08" stroke-width="1" fill="none"/>
<path d="M1471.0,442.5 L1486.9,428.7" stroke="#061a08" stroke-width="1" fill="none"/>
</g>
<g id="tube">
<path d="M424.7,418.7 L489.7,362.1 L2170.3,847.2 L2105.3,903.8Z" fill="url(#tt)" stroke="#1a1a1a" stroke-width="1.2" stroke-linejoin="round"/>
<path d="M424.7,418.7 L2105.3,903.8 L2105.3,1127.8 L424.7,642.7Z" fill="url(#tf)" stroke="#1a1a1a" stroke-width="1.2" stroke-linejoin="round"/>
<use href="#hT" x="513.2" y="406.6"/>
<use href="#hT" x="569.2" y="422.7"/>
<use href="#hT" x="625.3" y="438.9"/>
<use href="#hT" x="681.3" y="455.1"/>
<use href="#hT" x="737.3" y="471.2"/>
<use href="#hT" x="793.3" y="487.4"/>
<use href="#hT" x="849.3" y="503.6"/>
<use href="#hT" x="905.4" y="519.8"/>
<use href="#hT" x="961.4" y="535.9"/>
<use href="#hT" x="1409.5" y="665.3"/>
<use href="#hT" x="1465.6" y="681.5"/>
<use href="#hT" x="1521.6" y="697.6"/>
<use href="#hT" x="1577.6" y="713.8"/>
<use href="#hT" x="1633.6" y="730.0"/>
<use href="#hT" x="1689.6" y="746.1"/>
<use href="#hT" x="1745.7" y="762.3"/>
<use href="#hT" x="1801.7" y="778.5"/>
<use href="#hT" x="1857.7" y="794.7"/>
<use href="#hT" x="1913.7" y="810.8"/>
<use href="#hT" x="1969.7" y="827.0"/>
<use href="#hT" x="2025.8" y="843.2"/>
<use href="#hT" x="2081.8" y="859.3"/>
<use href="#hC" x="480.7" y="490.9"/>
<use href="#hC" x="480.7" y="546.9"/>
<use href="#hB" x="480.7" y="602.9"/>
<use href="#hA" x="536.7" y="507.0"/>
<use href="#hA" x="536.7" y="563.0"/>
<use href="#hB" x="536.7" y="619.0"/>
<use href="#hA" x="592.8" y="523.2"/>
<use href="#hA" x="592.8" y="579.2"/>
<use href="#hB" x="592.8" y="635.2"/>
<use href="#hA" x="648.8" y="539.4"/>
<use href="#hA" x="648.8" y="595.4"/>
<use href="#hB" x="648.8" y="651.4"/>
<use href="#hA" x="704.8" y="555.5"/>
<use href="#hA" x="704.8" y="611.5"/>
<use href="#hB" x="704.8" y="667.5"/>
<use href="#hA" x="760.8" y="571.7"/>
<use href="#hA" x="760.8" y="627.7"/>
<use href="#hB" x="760.8" y="683.7"/>
<use href="#hA" x="816.8" y="587.9"/>
<use href="#hA" x="816.8" y="643.9"/>
<use href="#hB" x="816.8" y="699.9"/>
<use href="#hA" x="928.9" y="620.2"/>
<use href="#hA" x="928.9" y="676.2"/>
<use href="#hB" x="928.9" y="732.2"/>
<use href="#hA" x="984.9" y="636.4"/>
<use href="#hA" x="984.9" y="692.4"/>
<use href="#hB" x="984.9" y="748.4"/>
<use href="#hA" x="1377.0" y="749.6"/>
<use href="#hA" x="1377.0" y="805.6"/>
<use href="#hB" x="1377.0" y="861.6"/>
<use href="#hA" x="1433.1" y="765.8"/>
<use href="#hA" x="1433.1" y="821.8"/>
<use href="#hB" x="1433.1" y="877.8"/>
<use href="#hA" x="1489.1" y="781.9"/>
<use href="#hA" x="1489.1" y="837.9"/>
<use href="#hB" x="1489.1" y="893.9"/>
<use href="#hA" x="1545.1" y="798.1"/>
<use href="#hA" x="1545.1" y="854.1"/>
<use href="#hB" x="1545.1" y="910.1"/>
<use href="#hA" x="1601.1" y="814.3"/>
<use href="#hA" x="1601.1" y="870.3"/>
<use href="#hB" x="1601.1" y="926.3"/>
<use href="#hA" x="1657.1" y="830.4"/>
<use href="#hA" x="1657.1" y="886.4"/>
<use href="#hB" x="1657.1" y="942.4"/>
<use href="#hA" x="1713.2" y="846.6"/>
<use href="#hA" x="1713.2" y="902.6"/>
<use href="#hB" x="1713.2" y="958.6"/>
<use href="#hA" x="1769.2" y="862.8"/>
<use href="#hA" x="1769.2" y="918.8"/>
<use href="#hB" x="1769.2" y="974.8"/>
<use href="#hA" x="1825.2" y="879.0"/>
<use href="#hA" x="1825.2" y="935.0"/>
<use href="#hB" x="1825.2" y="991.0"/>
<use href="#hA" x="1881.2" y="895.1"/>
<use href="#hA" x="1881.2" y="951.1"/>
<use href="#hB" x="1881.2" y="1007.1"/>
<use href="#hA" x="1937.2" y="911.3"/>
<use href="#hA" x="1937.2" y="967.3"/>
<use href="#hB" x="1937.2" y="1023.3"/>
<use href="#hA" x="1993.3" y="927.5"/>
<use href="#hA" x="1993.3" y="983.5"/>
<use href="#hB" x="1993.3" y="1039.5"/>
<use href="#hA" x="2049.3" y="943.6"/>
<use href="#hA" x="2049.3" y="999.6"/>
<use href="#hB" x="2049.3" y="1055.6"/>
</g>
<g id="crush">
<path d="M893.5,557.5 L895.9,558.4 L898.2,559.8 L900.4,561.5 L902.2,563.6 L903.8,565.9 L904.9,568.4 L905.6,570.9 L905.8,573.3 L905.8,765.4 L905.6,767.8 L904.9,769.9 L903.8,771.7 L902.2,773.1 L900.4,774.1 L898.2,774.6 L895.9,774.6 L893.5,774.2 L852.6,762.4 L850.2,761.5 L847.9,760.1 L845.8,758.3 L843.9,756.3 L842.4,753.9 L841.2,751.5 L840.5,749.0 L840.3,746.5 L840.3,554.4 L840.5,552.1 L841.2,550.0 L842.4,548.2 L843.9,546.8 L845.8,545.8 L847.9,545.2 L850.2,545.2 L852.6,545.7Z" fill="#dcaa4c" stroke="#f3b43c" stroke-width="3.6" stroke-linejoin="round"/>
<path d="M887.3,562.8 L889.8,563.8 L895.9,558.4 L893.5,557.5Z M889.8,563.8 L892.1,565.1 L898.2,559.8 L895.9,558.4Z M892.1,565.1 L894.2,566.9 L900.4,561.5 L898.2,559.8Z M894.2,566.9 L896.1,569.0 L902.2,563.6 L900.4,561.5Z M896.1,569.0 L897.6,571.3 L903.8,565.9 L902.2,563.6Z M897.6,571.3 L898.7,573.7 L904.9,568.4 L903.8,565.9Z M898.7,573.7 L899.4,576.2 L905.6,570.9 L904.9,568.4Z M899.4,576.2 L899.7,578.7 L905.8,573.3 L905.6,570.9Z M899.7,578.7 L899.7,770.8 L905.8,765.4 L905.8,573.3Z M899.7,770.8 L899.4,773.1 L905.6,767.8 L905.8,765.4Z M899.4,773.1 L898.7,775.2 L904.9,769.9 L905.6,767.8Z M898.7,775.2 L897.6,777.0 L903.8,771.7 L904.9,769.9Z M897.6,777.0 L896.1,778.5 L902.2,773.1 L903.8,771.7Z M896.1,778.5 L894.2,779.5 L900.4,774.1 L902.2,773.1Z M894.2,779.5 L892.1,780.0 L898.2,774.6 L900.4,774.1Z M892.1,780.0 L889.8,780.0 L895.9,774.6 L898.2,774.6Z M889.8,780.0 L887.3,779.6 L893.5,774.2 L895.9,774.6Z M887.3,779.6 L846.5,767.8 L852.6,762.4 L893.5,774.2Z M846.5,767.8 L844.0,766.8 L850.2,761.5 L852.6,762.4Z M844.0,766.8 L841.7,765.5 L847.9,760.1 L850.2,761.5Z M841.7,765.5 L839.6,763.7 L845.8,758.3 L847.9,760.1Z M839.6,763.7 L837.7,761.6 L843.9,756.3 L845.8,758.3Z M837.7,761.6 L836.2,759.3 L842.4,753.9 L843.9,756.3Z M836.2,759.3 L835.1,756.9 L841.2,751.5 L842.4,753.9Z M835.1,756.9 L834.4,754.4 L840.5,749.0 L841.2,751.5Z M834.4,754.4 L834.1,751.9 L840.3,746.5 L840.5,749.0Z M834.1,751.9 L834.1,559.8 L840.3,554.4 L840.3,746.5Z M834.1,559.8 L834.4,557.5 L840.5,552.1 L840.3,554.4Z M834.4,557.5 L835.1,555.4 L841.2,550.0 L840.5,552.1Z M835.1,555.4 L836.2,553.6 L842.4,548.2 L841.2,550.0Z M836.2,553.6 L837.7,552.1 L843.9,546.8 L842.4,548.2Z M837.7,552.1 L839.6,551.1 L845.8,545.8 L843.9,546.8Z M839.6,551.1 L841.7,550.6 L847.9,545.2 L845.8,545.8Z M841.7,550.6 L844.0,550.6 L850.2,545.2 L847.9,545.2Z M844.0,550.6 L846.5,551.0 L852.6,545.7 L850.2,545.2Z M846.5,551.0 L887.3,562.8 L893.5,557.5 L852.6,545.7Z" fill="#dcaa4c" stroke="#dcaa4c" stroke-width="0.8"/>
<path d="M887.3,562.8 L889.8,563.8 L892.1,565.1 L894.2,566.9 L896.1,569.0 L897.6,571.3 L898.7,573.7 L899.4,576.2 L899.7,578.7 L899.7,770.8 L899.4,773.1 L898.7,775.2 L897.6,777.0 L896.1,778.5 L894.2,779.5 L892.1,780.0 L889.8,780.0 L887.3,779.6 L846.5,767.8 L844.0,766.8 L841.7,765.5 L839.6,763.7 L837.7,761.6 L836.2,759.3 L835.1,756.9 L834.4,754.4 L834.1,751.9 L834.1,559.8 L834.4,557.5 L835.1,555.4 L836.2,553.6 L837.7,552.1 L839.6,551.1 L841.7,550.6 L844.0,550.6 L846.5,551.0Z" fill="none" stroke="#f3b43c" stroke-width="3.6" stroke-linejoin="round"/>
<path d="M887.3,562.8 L889.8,563.8 L892.1,565.1 L894.2,566.9 L896.1,569.0 L897.6,571.3 L898.7,573.7 L899.4,576.2 L899.7,578.7 L899.7,770.8 L899.4,773.1 L898.7,775.2 L897.6,777.0 L896.1,778.5 L894.2,779.5 L892.1,780.0 L889.8,780.0 L887.3,779.6 L846.5,767.8 L844.0,766.8 L841.7,765.5 L839.6,763.7 L837.7,761.6 L836.2,759.3 L835.1,756.9 L834.4,754.4 L834.1,751.9 L834.1,559.8 L834.4,557.5 L835.1,555.4 L836.2,553.6 L837.7,552.1 L839.6,551.1 L841.7,550.6 L844.0,550.6 L846.5,551.0Z" fill="#c4993f" stroke="#a8802f" stroke-width="0.9"/>
<path d="M878.1,612.5 A12.94 9.70 -130.93 1 0 855.7,606.1 A12.94 9.70 -130.93 1 0 878.1,612.5Z" fill="#e6b04a" stroke="#f1b84a" stroke-width="1.6"/>
<g clip-path="url(#ch0)"><path d="M884.8,606.7 A12.94 9.70 -130.93 1 0 862.4,600.2 A12.94 9.70 -130.93 1 0 884.8,606.7Z" fill="#6f7172" stroke="#3a3a3a" stroke-width="0.8"/>
<ellipse cx="872.4" cy="606.8" rx="6.5" ry="3.4" transform="rotate(40 872.4 606.8)" fill="#f2f2f2"/></g>
<path d="M878.1,724.5 A12.94 9.70 -130.93 1 0 855.7,718.1 A12.94 9.70 -130.93 1 0 878.1,724.5Z" fill="#e6b04a" stroke="#f1b84a" stroke-width="1.6"/>
<g clip-path="url(#ch2)"><path d="M884.8,718.7 A12.94 9.70 -130.93 1 0 862.4,712.2 A12.94 9.70 -130.93 1 0 884.8,718.7Z" fill="#6f7172" stroke="#3a3a3a" stroke-width="0.8"/>
<ellipse cx="872.4" cy="718.8" rx="6.5" ry="3.4" transform="rotate(40 872.4 718.8)" fill="#f2f2f2"/></g>
</g>
<g id="smallplate">
<path d="M1015.1,410.2 L1014.8,407.3 L1014.5,403.1 L1014.2,398.5 L1014.2,394.2 L1014.3,390.3 L1014.6,386.4 L1015.1,382.6 L1015.8,378.9 L1016.7,375.2 L1017.8,371.4 L1019.0,367.9 L1020.4,364.6 L1021.8,361.7 L1023.3,359.1 L1025.0,356.6 L1026.9,354.2 L1028.9,351.8 L1031.2,349.4 L1033.5,347.2 L1035.9,345.1 L1038.1,343.2 L1040.3,341.5 L1042.6,339.9 L1045.0,338.6 L1047.5,337.5 L1050.1,336.7 L1052.7,336.0 L1055.4,335.4 L1057.9,334.9 L1060.4,334.4 L1063.0,334.0 L1065.8,333.5 L1068.8,332.8 L1072.1,332.0 L1075.5,331.1 L1078.8,330.2 L1082.0,329.2 L1085.2,328.2 L1088.4,327.0 L1091.7,325.7 L1095.2,323.9 L1099.0,321.8 L1102.3,319.8 L1104.7,318.5 L1106.8,317.3 L1108.9,315.9 L1111.1,314.4 L1113.2,312.6 L1115.4,310.8 L1117.7,308.7 L1119.9,306.5 L1122.1,304.1 L1124.4,301.5 L1126.6,298.7 L1128.8,295.7 L1131.0,292.6 L1133.2,289.2 L1135.4,285.7 L1167.4,233.8 L1168.3,232.3 L1169.3,231.0 L1170.3,229.7 L1171.4,228.6 L1172.4,227.6 L1173.5,226.7 L1174.7,225.9 L1175.8,225.2 L1177.1,224.6 L1178.3,224.1 L1179.6,223.7 L1181.0,223.3 L1182.4,223.1 L1183.9,223.0 L1185.5,222.9 L1187.1,223.0 L1188.6,223.2 L1190.0,223.6 L1191.4,224.1 L1192.6,224.7 L1193.8,225.4 L1195.0,226.2 L1196.0,227.1 L1197.0,228.0 L1198.0,229.0 L1198.9,230.0 L1199.7,231.0 L1200.6,232.1 L1372.9,413.2 L1377.3,418.1 L1381.4,423.4 L1385.3,429.0 L1388.8,434.9 L1392.1,440.9 L1395.1,447.1 L1397.7,453.3 L1399.9,459.7 L1401.8,466.0 L1403.3,472.3 L1404.4,478.5 L1405.0,484.6 L1405.2,490.5 L1404.9,496.2 L1382.9,751.2 L1382.9,904.9 L1037.1,807.1Z M999.2,424.0 L999.0,421.1 L1014.8,407.3 L1015.1,410.2Z M999.0,421.1 L998.7,417.0 L1014.5,403.1 L1014.8,407.3Z M998.7,417.0 L998.4,412.3 L1014.2,398.5 L1014.5,403.1Z M998.4,412.3 L998.3,408.0 L1014.2,394.2 L1014.2,398.5Z M998.3,408.0 L998.5,404.1 L1014.3,390.3 L1014.2,394.2Z M998.5,404.1 L998.8,400.2 L1014.6,386.4 L1014.3,390.3Z M998.8,400.2 L999.2,396.4 L1015.1,382.6 L1014.6,386.4Z M999.2,396.4 L999.9,392.7 L1015.8,378.9 L1015.1,382.6Z M999.9,392.7 L1000.8,389.0 L1016.7,375.2 L1015.8,378.9Z M1000.8,389.0 L1001.9,385.2 L1017.8,371.4 L1016.7,375.2Z M1001.9,385.2 L1003.1,381.7 L1019.0,367.9 L1017.8,371.4Z M1003.1,381.7 L1004.5,378.4 L1020.4,364.6 L1019.0,367.9Z M1004.5,378.4 L1005.9,375.5 L1021.8,361.7 L1020.4,364.6Z M1005.9,375.5 L1007.5,372.9 L1023.3,359.1 L1021.8,361.7Z M1007.5,372.9 L1009.2,370.4 L1025.0,356.6 L1023.3,359.1Z M1009.2,370.4 L1011.0,368.0 L1026.9,354.2 L1025.0,356.6Z M1011.0,368.0 L1013.1,365.6 L1028.9,351.8 L1026.9,354.2Z M1013.1,365.6 L1015.3,363.2 L1031.2,349.4 L1028.9,351.8Z M1015.3,363.2 L1017.7,361.0 L1033.5,347.2 L1031.2,349.4Z M1017.7,361.0 L1020.0,358.9 L1035.9,345.1 L1033.5,347.2Z M1035.9,345.1 L1038.1,343.2 L1022.2,357.0 L1020.0,358.9Z M1038.1,343.2 L1040.3,341.5 L1024.5,355.3 L1022.2,357.0Z M1040.3,341.5 L1042.6,339.9 L1026.7,353.7 L1024.5,355.3Z M1042.6,339.9 L1045.0,338.6 L1029.1,352.4 L1026.7,353.7Z M1045.0,338.6 L1047.5,337.5 L1031.6,351.3 L1029.1,352.4Z M1047.5,337.5 L1050.1,336.7 L1034.2,350.5 L1031.6,351.3Z M1050.1,336.7 L1052.7,336.0 L1036.9,349.8 L1034.2,350.5Z M1052.7,336.0 L1055.4,335.4 L1039.5,349.2 L1036.9,349.8Z M1055.4,335.4 L1057.9,334.9 L1042.0,348.7 L1039.5,349.2Z M1057.9,334.9 L1060.4,334.4 L1044.5,348.3 L1042.0,348.7Z M1060.4,334.4 L1063.0,334.0 L1047.1,347.8 L1044.5,348.3Z M1063.0,334.0 L1065.8,333.5 L1049.9,347.3 L1047.1,347.8Z M1065.8,333.5 L1068.8,332.8 L1053.0,346.6 L1049.9,347.3Z M1068.8,332.8 L1072.1,332.0 L1056.2,345.8 L1053.0,346.6Z M1072.1,332.0 L1075.5,331.1 L1059.6,344.9 L1056.2,345.8Z M1075.5,331.1 L1078.8,330.2 L1062.9,344.0 L1059.6,344.9Z M1078.8,330.2 L1082.0,329.2 L1066.1,343.0 L1062.9,344.0Z M1082.0,329.2 L1085.2,328.2 L1069.4,342.0 L1066.1,343.0Z M1085.2,328.2 L1088.4,327.0 L1072.6,340.8 L1069.4,342.0Z M1088.4,327.0 L1091.7,325.7 L1075.8,339.5 L1072.6,340.8Z M1091.7,325.7 L1095.2,323.9 L1079.3,337.7 L1075.8,339.5Z M1095.2,323.9 L1099.0,321.8 L1083.1,335.6 L1079.3,337.7Z M1099.0,321.8 L1102.3,319.8 L1086.5,333.7 L1083.1,335.6Z M1102.3,319.8 L1104.7,318.5 L1088.8,332.3 L1086.5,333.7Z M1104.7,318.5 L1106.8,317.3 L1090.9,331.1 L1088.8,332.3Z M1106.8,317.3 L1108.9,315.9 L1093.0,329.7 L1090.9,331.1Z M1108.9,315.9 L1111.1,314.4 L1095.2,328.2 L1093.0,329.7Z M1111.1,314.4 L1113.2,312.6 L1097.4,326.5 L1095.2,328.2Z M1113.2,312.6 L1115.4,310.8 L1099.6,324.6 L1097.4,326.5Z M1099.6,324.6 L1101.8,322.5 L1117.7,308.7 L1115.4,310.8Z M1101.8,322.5 L1104.0,320.3 L1119.9,306.5 L1117.7,308.7Z M1104.0,320.3 L1106.3,317.9 L1122.1,304.1 L1119.9,306.5Z M1106.3,317.9 L1108.5,315.3 L1124.4,301.5 L1122.1,304.1Z M1108.5,315.3 L1110.7,312.5 L1126.6,298.7 L1124.4,301.5Z M1110.7,312.5 L1113.0,309.5 L1128.8,295.7 L1126.6,298.7Z M1113.0,309.5 L1115.2,306.4 L1131.0,292.6 L1128.8,295.7Z M1115.2,306.4 L1117.3,303.0 L1133.2,289.2 L1131.0,292.6Z M1117.3,303.0 L1119.5,299.5 L1135.4,285.7 L1133.2,289.2Z M1119.5,299.5 L1151.5,247.6 L1167.4,233.8 L1135.4,285.7Z M1151.5,247.6 L1152.5,246.1 L1168.3,232.3 L1167.4,233.8Z M1152.5,246.1 L1153.5,244.8 L1169.3,231.0 L1168.3,232.3Z M1153.5,244.8 L1154.5,243.6 L1170.3,229.7 L1169.3,231.0Z M1154.5,243.6 L1155.5,242.4 L1171.4,228.6 L1170.3,229.7Z M1155.5,242.4 L1156.6,241.4 L1172.4,227.6 L1171.4,228.6Z M1172.4,227.6 L1173.5,226.7 L1157.7,240.5 L1156.6,241.4Z M1173.5,226.7 L1174.7,225.9 L1158.8,239.7 L1157.7,240.5Z M1174.7,225.9 L1175.8,225.2 L1160.0,239.0 L1158.8,239.7Z M1175.8,225.2 L1177.1,224.6 L1161.2,238.4 L1160.0,239.0Z M1177.1,224.6 L1178.3,224.1 L1162.5,237.9 L1161.2,238.4Z M1178.3,224.1 L1179.6,223.7 L1163.8,237.5 L1162.5,237.9Z M1179.6,223.7 L1181.0,223.3 L1165.1,237.2 L1163.8,237.5Z M1181.0,223.3 L1182.4,223.1 L1166.5,236.9 L1165.1,237.2Z M1182.4,223.1 L1183.9,223.0 L1168.0,236.8 L1166.5,236.9Z M1183.9,223.0 L1185.5,222.9 L1169.7,236.7 L1168.0,236.8Z M1185.5,222.9 L1187.1,223.0 L1171.2,236.8 L1169.7,236.7Z M1187.1,223.0 L1188.6,223.2 L1172.7,237.0 L1171.2,236.8Z M1188.6,223.2 L1190.0,223.6 L1174.2,237.4 L1172.7,237.0Z M1190.0,223.6 L1191.4,224.1 L1175.5,237.9 L1174.2,237.4Z M1191.4,224.1 L1192.6,224.7 L1176.8,238.5 L1175.5,237.9Z M1192.6,224.7 L1193.8,225.4 L1178.0,239.2 L1176.8,238.5Z M1193.8,225.4 L1195.0,226.2 L1179.1,240.0 L1178.0,239.2Z M1195.0,226.2 L1196.0,227.1 L1180.2,240.9 L1179.1,240.0Z M1196.0,227.1 L1197.0,228.0 L1181.2,241.8 L1180.2,240.9Z M1197.0,228.0 L1198.0,229.0 L1182.1,242.8 L1181.2,241.8Z M1198.0,229.0 L1198.9,230.0 L1183.0,243.8 L1182.1,242.8Z M1198.9,230.0 L1199.7,231.0 L1183.9,244.9 L1183.0,243.8Z M1199.7,231.0 L1200.6,232.1 L1184.7,245.9 L1183.9,244.9Z M1200.6,232.1 L1372.9,413.2 L1357.0,427.0 L1184.7,245.9Z M1372.9,413.2 L1377.3,418.1 L1361.4,432.0 L1357.0,427.0Z M1377.3,418.1 L1381.4,423.4 L1365.5,437.3 L1361.4,432.0Z M1381.4,423.4 L1385.3,429.0 L1369.4,442.8 L1365.5,437.3Z M1385.3,429.0 L1388.8,434.9 L1373.0,448.7 L1369.4,442.8Z M1388.8,434.9 L1392.1,440.9 L1376.3,454.7 L1373.0,448.7Z M1392.1,440.9 L1395.1,447.1 L1379.2,460.9 L1376.3,454.7Z M1395.1,447.1 L1397.7,453.3 L1381.8,467.2 L1379.2,460.9Z M1397.7,453.3 L1399.9,459.7 L1384.1,473.5 L1381.8,467.2Z M1399.9,459.7 L1401.8,466.0 L1386.0,479.8 L1384.1,473.5Z M1401.8,466.0 L1403.3,472.3 L1387.4,486.1 L1386.0,479.8Z M1403.3,472.3 L1404.4,478.5 L1388.5,492.3 L1387.4,486.1Z M1404.4,478.5 L1405.0,484.6 L1389.1,498.4 L1388.5,492.3Z M1405.0,484.6 L1405.2,490.5 L1389.3,504.3 L1389.1,498.4Z M1405.2,490.5 L1404.9,496.2 L1389.0,510.0 L1389.3,504.3Z M1404.9,496.2 L1382.9,751.2 L1367.0,765.0 L1389.0,510.0Z M1382.9,751.2 L1382.9,904.9 L1367.0,918.7 L1367.0,765.0Z M1367.0,918.7 L1021.2,820.9 L1037.1,807.1 L1382.9,904.9Z M1021.2,820.9 L999.2,424.0 L1015.1,410.2 L1037.1,807.1Z" fill="#061a08" stroke="#061a08" stroke-width="3" stroke-linejoin="round"/>
<path d="M1015.1,410.2 L1014.8,407.3 L1014.5,403.1 L1014.2,398.5 L1014.2,394.2 L1014.3,390.3 L1014.6,386.4 L1015.1,382.6 L1015.8,378.9 L1016.7,375.2 L1017.8,371.4 L1019.0,367.9 L1020.4,364.6 L1021.8,361.7 L1023.3,359.1 L1025.0,356.6 L1026.9,354.2 L1028.9,351.8 L1031.2,349.4 L1033.5,347.2 L1035.9,345.1 L1038.1,343.2 L1040.3,341.5 L1042.6,339.9 L1045.0,338.6 L1047.5,337.5 L1050.1,336.7 L1052.7,336.0 L1055.4,335.4 L1057.9,334.9 L1060.4,334.4 L1063.0,334.0 L1065.8,333.5 L1068.8,332.8 L1072.1,332.0 L1075.5,331.1 L1078.8,330.2 L1082.0,329.2 L1085.2,328.2 L1088.4,327.0 L1091.7,325.7 L1095.2,323.9 L1099.0,321.8 L1102.3,319.8 L1104.7,318.5 L1106.8,317.3 L1108.9,315.9 L1111.1,314.4 L1113.2,312.6 L1115.4,310.8 L1117.7,308.7 L1119.9,306.5 L1122.1,304.1 L1124.4,301.5 L1126.6,298.7 L1128.8,295.7 L1131.0,292.6 L1133.2,289.2 L1135.4,285.7 L1167.4,233.8 L1168.3,232.3 L1169.3,231.0 L1170.3,229.7 L1171.4,228.6 L1172.4,227.6 L1173.5,226.7 L1174.7,225.9 L1175.8,225.2 L1177.1,224.6 L1178.3,224.1 L1179.6,223.7 L1181.0,223.3 L1182.4,223.1 L1183.9,223.0 L1185.5,222.9 L1187.1,223.0 L1188.6,223.2 L1190.0,223.6 L1191.4,224.1 L1192.6,224.7 L1193.8,225.4 L1195.0,226.2 L1196.0,227.1 L1197.0,228.0 L1198.0,229.0 L1198.9,230.0 L1199.7,231.0 L1200.6,232.1 L1372.9,413.2 L1377.3,418.1 L1381.4,423.4 L1385.3,429.0 L1388.8,434.9 L1392.1,440.9 L1395.1,447.1 L1397.7,453.3 L1399.9,459.7 L1401.8,466.0 L1403.3,472.3 L1404.4,478.5 L1405.0,484.6 L1405.2,490.5 L1404.9,496.2 L1382.9,751.2 L1382.9,904.9 L1037.1,807.1Z M999.2,424.0 L999.0,421.1 L1014.8,407.3 L1015.1,410.2Z M999.0,421.1 L998.7,417.0 L1014.5,403.1 L1014.8,407.3Z M998.7,417.0 L998.4,412.3 L1014.2,398.5 L1014.5,403.1Z M998.4,412.3 L998.3,408.0 L1014.2,394.2 L1014.2,398.5Z M998.3,408.0 L998.5,404.1 L1014.3,390.3 L1014.2,394.2Z M998.5,404.1 L998.8,400.2 L1014.6,386.4 L1014.3,390.3Z M998.8,400.2 L999.2,396.4 L1015.1,382.6 L1014.6,386.4Z M999.2,396.4 L999.9,392.7 L1015.8,378.9 L1015.1,382.6Z M999.9,392.7 L1000.8,389.0 L1016.7,375.2 L1015.8,378.9Z M1000.8,389.0 L1001.9,385.2 L1017.8,371.4 L1016.7,375.2Z M1001.9,385.2 L1003.1,381.7 L1019.0,367.9 L1017.8,371.4Z M1003.1,381.7 L1004.5,378.4 L1020.4,364.6 L1019.0,367.9Z M1004.5,378.4 L1005.9,375.5 L1021.8,361.7 L1020.4,364.6Z M1005.9,375.5 L1007.5,372.9 L1023.3,359.1 L1021.8,361.7Z M1007.5,372.9 L1009.2,370.4 L1025.0,356.6 L1023.3,359.1Z M1009.2,370.4 L1011.0,368.0 L1026.9,354.2 L1025.0,356.6Z M1011.0,368.0 L1013.1,365.6 L1028.9,351.8 L1026.9,354.2Z M1013.1,365.6 L1015.3,363.2 L1031.2,349.4 L1028.9,351.8Z M1015.3,363.2 L1017.7,361.0 L1033.5,347.2 L1031.2,349.4Z M1017.7,361.0 L1020.0,358.9 L1035.9,345.1 L1033.5,347.2Z M1035.9,345.1 L1038.1,343.2 L1022.2,357.0 L1020.0,358.9Z M1038.1,343.2 L1040.3,341.5 L1024.5,355.3 L1022.2,357.0Z M1040.3,341.5 L1042.6,339.9 L1026.7,353.7 L1024.5,355.3Z M1042.6,339.9 L1045.0,338.6 L1029.1,352.4 L1026.7,353.7Z M1045.0,338.6 L1047.5,337.5 L1031.6,351.3 L1029.1,352.4Z M1047.5,337.5 L1050.1,336.7 L1034.2,350.5 L1031.6,351.3Z M1050.1,336.7 L1052.7,336.0 L1036.9,349.8 L1034.2,350.5Z M1052.7,336.0 L1055.4,335.4 L1039.5,349.2 L1036.9,349.8Z M1055.4,335.4 L1057.9,334.9 L1042.0,348.7 L1039.5,349.2Z M1057.9,334.9 L1060.4,334.4 L1044.5,348.3 L1042.0,348.7Z M1060.4,334.4 L1063.0,334.0 L1047.1,347.8 L1044.5,348.3Z M1063.0,334.0 L1065.8,333.5 L1049.9,347.3 L1047.1,347.8Z M1065.8,333.5 L1068.8,332.8 L1053.0,346.6 L1049.9,347.3Z M1068.8,332.8 L1072.1,332.0 L1056.2,345.8 L1053.0,346.6Z M1072.1,332.0 L1075.5,331.1 L1059.6,344.9 L1056.2,345.8Z M1075.5,331.1 L1078.8,330.2 L1062.9,344.0 L1059.6,344.9Z M1078.8,330.2 L1082.0,329.2 L1066.1,343.0 L1062.9,344.0Z M1082.0,329.2 L1085.2,328.2 L1069.4,342.0 L1066.1,343.0Z M1085.2,328.2 L1088.4,327.0 L1072.6,340.8 L1069.4,342.0Z M1088.4,327.0 L1091.7,325.7 L1075.8,339.5 L1072.6,340.8Z M1091.7,325.7 L1095.2,323.9 L1079.3,337.7 L1075.8,339.5Z M1095.2,323.9 L1099.0,321.8 L1083.1,335.6 L1079.3,337.7Z M1099.0,321.8 L1102.3,319.8 L1086.5,333.7 L1083.1,335.6Z M1102.3,319.8 L1104.7,318.5 L1088.8,332.3 L1086.5,333.7Z M1104.7,318.5 L1106.8,317.3 L1090.9,331.1 L1088.8,332.3Z M1106.8,317.3 L1108.9,315.9 L1093.0,329.7 L1090.9,331.1Z M1108.9,315.9 L1111.1,314.4 L1095.2,328.2 L1093.0,329.7Z M1111.1,314.4 L1113.2,312.6 L1097.4,326.5 L1095.2,328.2Z M1113.2,312.6 L1115.4,310.8 L1099.6,324.6 L1097.4,326.5Z M1099.6,324.6 L1101.8,322.5 L1117.7,308.7 L1115.4,310.8Z M1101.8,322.5 L1104.0,320.3 L1119.9,306.5 L1117.7,308.7Z M1104.0,320.3 L1106.3,317.9 L1122.1,304.1 L1119.9,306.5Z M1106.3,317.9 L1108.5,315.3 L1124.4,301.5 L1122.1,304.1Z M1108.5,315.3 L1110.7,312.5 L1126.6,298.7 L1124.4,301.5Z M1110.7,312.5 L1113.0,309.5 L1128.8,295.7 L1126.6,298.7Z M1113.0,309.5 L1115.2,306.4 L1131.0,292.6 L1128.8,295.7Z M1115.2,306.4 L1117.3,303.0 L1133.2,289.2 L1131.0,292.6Z M1117.3,303.0 L1119.5,299.5 L1135.4,285.7 L1133.2,289.2Z M1119.5,299.5 L1151.5,247.6 L1167.4,233.8 L1135.4,285.7Z M1151.5,247.6 L1152.5,246.1 L1168.3,232.3 L1167.4,233.8Z M1152.5,246.1 L1153.5,244.8 L1169.3,231.0 L1168.3,232.3Z M1153.5,244.8 L1154.5,243.6 L1170.3,229.7 L1169.3,231.0Z M1154.5,243.6 L1155.5,242.4 L1171.4,228.6 L1170.3,229.7Z M1155.5,242.4 L1156.6,241.4 L1172.4,227.6 L1171.4,228.6Z M1172.4,227.6 L1173.5,226.7 L1157.7,240.5 L1156.6,241.4Z M1173.5,226.7 L1174.7,225.9 L1158.8,239.7 L1157.7,240.5Z M1174.7,225.9 L1175.8,225.2 L1160.0,239.0 L1158.8,239.7Z M1175.8,225.2 L1177.1,224.6 L1161.2,238.4 L1160.0,239.0Z M1177.1,224.6 L1178.3,224.1 L1162.5,237.9 L1161.2,238.4Z M1178.3,224.1 L1179.6,223.7 L1163.8,237.5 L1162.5,237.9Z M1179.6,223.7 L1181.0,223.3 L1165.1,237.2 L1163.8,237.5Z M1181.0,223.3 L1182.4,223.1 L1166.5,236.9 L1165.1,237.2Z M1182.4,223.1 L1183.9,223.0 L1168.0,236.8 L1166.5,236.9Z M1183.9,223.0 L1185.5,222.9 L1169.7,236.7 L1168.0,236.8Z M1185.5,222.9 L1187.1,223.0 L1171.2,236.8 L1169.7,236.7Z M1187.1,223.0 L1188.6,223.2 L1172.7,237.0 L1171.2,236.8Z M1188.6,223.2 L1190.0,223.6 L1174.2,237.4 L1172.7,237.0Z M1190.0,223.6 L1191.4,224.1 L1175.5,237.9 L1174.2,237.4Z M1191.4,224.1 L1192.6,224.7 L1176.8,238.5 L1175.5,237.9Z M1192.6,224.7 L1193.8,225.4 L1178.0,239.2 L1176.8,238.5Z M1193.8,225.4 L1195.0,226.2 L1179.1,240.0 L1178.0,239.2Z M1195.0,226.2 L1196.0,227.1 L1180.2,240.9 L1179.1,240.0Z M1196.0,227.1 L1197.0,228.0 L1181.2,241.8 L1180.2,240.9Z M1197.0,228.0 L1198.0,229.0 L1182.1,242.8 L1181.2,241.8Z M1198.0,229.0 L1198.9,230.0 L1183.0,243.8 L1182.1,242.8Z M1198.9,230.0 L1199.7,231.0 L1183.9,244.9 L1183.0,243.8Z M1199.7,231.0 L1200.6,232.1 L1184.7,245.9 L1183.9,244.9Z M1200.6,232.1 L1372.9,413.2 L1357.0,427.0 L1184.7,245.9Z M1372.9,413.2 L1377.3,418.1 L1361.4,432.0 L1357.0,427.0Z M1377.3,418.1 L1381.4,423.4 L1365.5,437.3 L1361.4,432.0Z M1381.4,423.4 L1385.3,429.0 L1369.4,442.8 L1365.5,437.3Z M1385.3,429.0 L1388.8,434.9 L1373.0,448.7 L1369.4,442.8Z M1388.8,434.9 L1392.1,440.9 L1376.3,454.7 L1373.0,448.7Z M1392.1,440.9 L1395.1,447.1 L1379.2,460.9 L1376.3,454.7Z M1395.1,447.1 L1397.7,453.3 L1381.8,467.2 L1379.2,460.9Z M1397.7,453.3 L1399.9,459.7 L1384.1,473.5 L1381.8,467.2Z M1399.9,459.7 L1401.8,466.0 L1386.0,479.8 L1384.1,473.5Z M1401.8,466.0 L1403.3,472.3 L1387.4,486.1 L1386.0,479.8Z M1403.3,472.3 L1404.4,478.5 L1388.5,492.3 L1387.4,486.1Z M1404.4,478.5 L1405.0,484.6 L1389.1,498.4 L1388.5,492.3Z M1405.0,484.6 L1405.2,490.5 L1389.3,504.3 L1389.1,498.4Z M1405.2,490.5 L1404.9,496.2 L1389.0,510.0 L1389.3,504.3Z M1404.9,496.2 L1382.9,751.2 L1367.0,765.0 L1389.0,510.0Z M1382.9,751.2 L1382.9,904.9 L1367.0,918.7 L1367.0,765.0Z M1367.0,918.7 L1021.2,820.9 L1037.1,807.1 L1382.9,904.9Z M1021.2,820.9 L999.2,424.0 L1015.1,410.2 L1037.1,807.1Z" fill="#51b055" stroke="#51b055" stroke-width="0.5" stroke-linejoin="round"/>
<path d="M1035.9,345.1 L1038.1,343.2 L1022.2,357.0 L1020.0,358.9Z M1038.1,343.2 L1040.3,341.5 L1024.5,355.3 L1022.2,357.0Z M1040.3,341.5 L1042.6,339.9 L1026.7,353.7 L1024.5,355.3Z M1042.6,339.9 L1045.0,338.6 L1029.1,352.4 L1026.7,353.7Z M1045.0,338.6 L1047.5,337.5 L1031.6,351.3 L1029.1,352.4Z M1047.5,337.5 L1050.1,336.7 L1034.2,350.5 L1031.6,351.3Z M1050.1,336.7 L1052.7,336.0 L1036.9,349.8 L1034.2,350.5Z M1072.1,332.0 L1075.5,331.1 L1059.6,344.9 L1056.2,345.8Z M1075.5,331.1 L1078.8,330.2 L1062.9,344.0 L1059.6,344.9Z M1078.8,330.2 L1082.0,329.2 L1066.1,343.0 L1062.9,344.0Z M1082.0,329.2 L1085.2,328.2 L1069.4,342.0 L1066.1,343.0Z M1085.2,328.2 L1088.4,327.0 L1072.6,340.8 L1069.4,342.0Z M1088.4,327.0 L1091.7,325.7 L1075.8,339.5 L1072.6,340.8Z M1091.7,325.7 L1095.2,323.9 L1079.3,337.7 L1075.8,339.5Z M1095.2,323.9 L1099.0,321.8 L1083.1,335.6 L1079.3,337.7Z M1099.0,321.8 L1102.3,319.8 L1086.5,333.7 L1083.1,335.6Z M1102.3,319.8 L1104.7,318.5 L1088.8,332.3 L1086.5,333.7Z M1104.7,318.5 L1106.8,317.3 L1090.9,331.1 L1088.8,332.3Z M1106.8,317.3 L1108.9,315.9 L1093.0,329.7 L1090.9,331.1Z M1108.9,315.9 L1111.1,314.4 L1095.2,328.2 L1093.0,329.7Z M1111.1,314.4 L1113.2,312.6 L1097.4,326.5 L1095.2,328.2Z M1113.2,312.6 L1115.4,310.8 L1099.6,324.6 L1097.4,326.5Z M1172.4,227.6 L1173.5,226.7 L1157.7,240.5 L1156.6,241.4Z M1173.5,226.7 L1174.7,225.9 L1158.8,239.7 L1157.7,240.5Z M1174.7,225.9 L1175.8,225.2 L1160.0,239.0 L1158.8,239.7Z M1175.8,225.2 L1177.1,224.6 L1161.2,238.4 L1160.0,239.0Z M1177.1,224.6 L1178.3,224.1 L1162.5,237.9 L1161.2,238.4Z M1178.3,224.1 L1179.6,223.7 L1163.8,237.5 L1162.5,237.9Z" fill="#37883d" stroke="#37883d" stroke-width="0.6" stroke-linejoin="round"/>
<path d="M1052.7,336.0 L1055.4,335.4 L1039.5,349.2 L1036.9,349.8Z M1055.4,335.4 L1057.9,334.9 L1042.0,348.7 L1039.5,349.2Z M1063.0,334.0 L1065.8,333.5 L1049.9,347.3 L1047.1,347.8Z M1065.8,333.5 L1068.8,332.8 L1053.0,346.6 L1049.9,347.3Z M1068.8,332.8 L1072.1,332.0 L1056.2,345.8 L1053.0,346.6Z M1179.6,223.7 L1181.0,223.3 L1165.1,237.2 L1163.8,237.5Z" fill="#3b8f41" stroke="#3b8f41" stroke-width="0.6" stroke-linejoin="round"/>
<path d="M1057.9,334.9 L1060.4,334.4 L1044.5,348.3 L1042.0,348.7Z M1060.4,334.4 L1063.0,334.0 L1047.1,347.8 L1044.5,348.3Z M1181.0,223.3 L1182.4,223.1 L1166.5,236.9 L1165.1,237.2Z" fill="#3f9545" stroke="#3f9545" stroke-width="0.6" stroke-linejoin="round"/>
<path d="M1182.4,223.1 L1183.9,223.0 L1168.0,236.8 L1166.5,236.9Z M1183.9,223.0 L1185.5,222.9 L1169.7,236.7 L1168.0,236.8Z M1405.2,490.5 L1404.9,496.2 L1389.0,510.0 L1389.3,504.3Z M1404.9,496.2 L1382.9,751.2 L1367.0,765.0 L1389.0,510.0Z" fill="#439a48" stroke="#439a48" stroke-width="0.6" stroke-linejoin="round"/>
<path d="M1185.5,222.9 L1187.1,223.0 L1171.2,236.8 L1169.7,236.7Z" fill="#49a44d" stroke="#49a44d" stroke-width="0.6" stroke-linejoin="round"/>
<path d="M1187.1,223.0 L1188.6,223.2 L1172.7,237.0 L1171.2,236.8Z M1404.4,478.5 L1405.0,484.6 L1389.1,498.4 L1388.5,492.3Z" fill="#4ba850" stroke="#4ba850" stroke-width="0.6" stroke-linejoin="round"/>
<path d="M1188.6,223.2 L1190.0,223.6 L1174.2,237.4 L1172.7,237.0Z M1399.9,459.7 L1401.8,466.0 L1386.0,479.8 L1384.1,473.5Z M1401.8,466.0 L1403.3,472.3 L1387.4,486.1 L1386.0,479.8Z" fill="#4fad53" stroke="#4fad53" stroke-width="0.6" stroke-linejoin="round"/>
<path d="M1190.0,223.6 L1191.4,224.1 L1175.5,237.9 L1174.2,237.4Z M1397.7,453.3 L1399.9,459.7 L1384.1,473.5 L1381.8,467.2Z" fill="#50af54" stroke="#50af54" stroke-width="0.6" stroke-linejoin="round"/>
<path d="M1191.4,224.1 L1192.6,224.7 L1176.8,238.5 L1175.5,237.9Z M1392.1,440.9 L1395.1,447.1 L1379.2,460.9 L1376.3,454.7Z M1395.1,447.1 L1397.7,453.3 L1381.8,467.2 L1379.2,460.9Z" fill="#51b155" stroke="#51b155" stroke-width="0.6" stroke-linejoin="round"/>
<path d="M1192.6,224.7 L1193.8,225.4 L1178.0,239.2 L1176.8,238.5Z M1193.8,225.4 L1195.0,226.2 L1179.1,240.0 L1178.0,239.2Z M1195.0,226.2 L1196.0,227.1 L1180.2,240.9 L1179.1,240.0Z M1196.0,227.1 L1197.0,228.0 L1181.2,241.8 L1180.2,240.9Z M1197.0,228.0 L1198.0,229.0 L1182.1,242.8 L1181.2,241.8Z M1198.0,229.0 L1198.9,230.0 L1183.0,243.8 L1182.1,242.8Z M1198.9,230.0 L1199.7,231.0 L1183.9,244.9 L1183.0,243.8Z M1199.7,231.0 L1200.6,232.1 L1184.7,245.9 L1183.9,244.9Z M1200.6,232.1 L1372.9,413.2 L1357.0,427.0 L1184.7,245.9Z M1372.9,413.2 L1377.3,418.1 L1361.4,432.0 L1357.0,427.0Z M1377.3,418.1 L1381.4,423.4 L1365.5,437.3 L1361.4,432.0Z M1381.4,423.4 L1385.3,429.0 L1369.4,442.8 L1365.5,437.3Z M1385.3,429.0 L1388.8,434.9 L1373.0,448.7 L1369.4,442.8Z M1388.8,434.9 L1392.1,440.9 L1376.3,454.7 L1373.0,448.7Z" fill="#52b256" stroke="#52b256" stroke-width="0.6" stroke-linejoin="round"/>
<path d="M1403.3,472.3 L1404.4,478.5 L1388.5,492.3 L1387.4,486.1Z" fill="#4dab52" stroke="#4dab52" stroke-width="0.6" stroke-linejoin="round"/>
<path d="M1405.0,484.6 L1405.2,490.5 L1389.3,504.3 L1389.1,498.4Z M1382.9,751.2 L1382.9,904.9 L1367.0,918.7 L1367.0,765.0Z" fill="#469f4b" stroke="#469f4b" stroke-width="0.6" stroke-linejoin="round"/>
<path d="M1144.5,454.4 A72.89 54.67 -130.93 1 0 1018.3,418.0 A72.89 54.67 -130.93 1 0 1144.5,454.4Z" fill="url(#gw)"/>
<path d="M1160.4,440.6 A72.89 54.67 -130.93 1 0 1034.1,404.2 A72.89 54.67 -130.93 1 0 1160.4,440.6Z" fill="#275929" stroke="#061a08" stroke-width="1.1" clip-path="url(#sp_h0)"/>
<path d="M1368.7,502.0 A72.89 54.67 -130.93 1 0 1242.5,465.6 A72.89 54.67 -130.93 1 0 1368.7,502.0Z" fill="url(#gw)"/>
<path d="M1384.6,488.2 A72.89 54.67 -130.93 1 0 1258.3,451.8 A72.89 54.67 -130.93 1 0 1384.6,488.2Z" fill="#275929" stroke="#061a08" stroke-width="1.1" clip-path="url(#sp_h1)"/>
<path d="M1183.9,262.7 A12.68 9.51 -130.93 1 0 1161.9,256.3 A12.68 9.51 -130.93 1 0 1183.9,262.7Z" fill="url(#gh)"/>
<g clip-path="url(#sl0)">
<path d="M1100.3,677.1 L1103.7,678.6 L1106.8,681.1 L1109.2,684.2 L1110.8,687.7 L1111.3,691.2 L1110.8,694.5 L1109.2,697.1 L1106.8,698.8 L1103.7,699.5 L1100.3,699.1 L1061.7,687.9 L1058.3,686.4 L1055.2,683.9 L1052.8,680.8 L1051.2,677.3 L1050.7,673.8 L1051.2,670.5 L1052.8,667.9 L1055.2,666.2 L1058.3,665.5 L1061.7,665.9Z" fill="#4a9c4f"/>
<path d="M1061.7,687.9 L1087.0,665.8 L1047.0,665.8 L1021.7,697.9Z" fill="url(#sg)"/>
<path d="M1116.2,663.3 L1119.6,664.8 L1122.6,667.3 L1125.1,670.4 L1126.6,673.9 L1127.2,677.4 L1126.6,680.7 L1125.1,683.3 L1122.6,685.0 L1119.6,685.7 L1116.2,685.2 L1077.5,674.1 L1074.1,672.6 L1071.1,670.1 L1068.7,667.0 L1067.1,663.5 L1066.6,659.9 L1067.1,656.7 L1068.7,654.1 L1071.1,652.4 L1074.1,651.7 L1077.5,652.1Z" fill="#9da29d" stroke="#061a08" stroke-width="0.9"/>
<ellipse cx="1090.0" cy="677.2" rx="6.5" ry="1.5" transform="rotate(17 1090.0 677.2)" fill="#e8e8e8"/>
<path d="M1061.7,687.9 L1077.5,674.1 M1100.3,699.1 L1116.2,685.2" stroke="#061a08" stroke-width="0.9"/>
</g>
<g clip-path="url(#sl1)">
<path d="M1324.3,742.0 L1327.7,743.5 L1330.8,746.0 L1333.2,749.1 L1334.8,752.6 L1335.3,756.1 L1334.8,759.4 L1333.2,762.0 L1330.8,763.7 L1327.7,764.4 L1324.3,764.0 L1285.7,752.8 L1282.3,751.3 L1279.2,748.8 L1276.8,745.7 L1275.2,742.2 L1274.7,738.7 L1275.2,735.4 L1276.8,732.8 L1279.2,731.1 L1282.3,730.4 L1285.7,730.8Z" fill="#4a9c4f"/>
<path d="M1285.7,752.8 L1311.0,730.7 L1271.0,730.7 L1245.7,762.8Z" fill="url(#sg)"/>
<path d="M1340.2,728.2 L1343.6,729.7 L1346.6,732.2 L1349.1,735.3 L1350.6,738.8 L1351.2,742.3 L1350.6,745.6 L1349.1,748.2 L1346.6,749.9 L1343.6,750.6 L1340.2,750.1 L1301.5,739.0 L1298.1,737.5 L1295.1,735.0 L1292.7,731.9 L1291.1,728.4 L1290.6,724.8 L1291.1,721.6 L1292.7,719.0 L1295.1,717.3 L1298.1,716.6 L1301.5,717.0Z" fill="#9da29d" stroke="#061a08" stroke-width="0.9"/>
<ellipse cx="1314.0" cy="742.1" rx="6.5" ry="1.5" transform="rotate(17 1314.0 742.1)" fill="#e8e8e8"/>
<path d="M1285.7,752.8 L1301.5,739.0 M1324.3,764.0 L1340.2,750.1" stroke="#061a08" stroke-width="0.9"/>
</g>
<g clip-path="url(#sl2)">
<path d="M1100.3,789.2 L1103.7,790.7 L1106.8,793.2 L1109.2,796.3 L1110.8,799.8 L1111.3,803.3 L1110.8,806.6 L1109.2,809.2 L1106.8,810.9 L1103.7,811.6 L1100.3,811.2 L1061.7,800.0 L1058.3,798.5 L1055.2,796.0 L1052.8,792.9 L1051.2,789.4 L1050.7,785.9 L1051.2,782.6 L1052.8,780.0 L1055.2,778.3 L1058.3,777.6 L1061.7,778.0Z" fill="#4a9c4f"/>
<path d="M1061.7,800.0 L1087.0,777.9 L1047.0,777.9 L1021.7,810.0Z" fill="url(#sg)"/>
<path d="M1116.2,775.4 L1119.6,776.9 L1122.6,779.4 L1125.1,782.5 L1126.6,786.0 L1127.2,789.5 L1126.6,792.8 L1125.1,795.4 L1122.6,797.1 L1119.6,797.8 L1116.2,797.3 L1077.5,786.2 L1074.1,784.7 L1071.1,782.2 L1068.7,779.1 L1067.1,775.6 L1066.6,772.0 L1067.1,768.8 L1068.7,766.2 L1071.1,764.5 L1074.1,763.8 L1077.5,764.2Z" fill="#9da29d" stroke="#061a08" stroke-width="0.9"/>
<ellipse cx="1090.0" cy="789.3" rx="6.5" ry="1.5" transform="rotate(17 1090.0 789.3)" fill="#e8e8e8"/>
<path d="M1061.7,800.0 L1077.5,786.2 M1100.3,811.2 L1116.2,797.3" stroke="#061a08" stroke-width="0.9"/>
</g>
<g clip-path="url(#sl3)">
<path d="M1324.3,854.1 L1327.7,855.6 L1330.8,858.1 L1333.2,861.2 L1334.8,864.7 L1335.3,868.2 L1334.8,871.5 L1333.2,874.1 L1330.8,875.8 L1327.7,876.5 L1324.3,876.1 L1285.7,864.9 L1282.3,863.4 L1279.2,860.9 L1276.8,857.8 L1275.2,854.3 L1274.7,850.8 L1275.2,847.5 L1276.8,844.9 L1279.2,843.2 L1282.3,842.5 L1285.7,842.9Z" fill="#4a9c4f"/>
<path d="M1285.7,864.9 L1311.0,842.8 L1271.0,842.8 L1245.7,874.9Z" fill="url(#sg)"/>
<path d="M1340.2,840.3 L1343.6,841.8 L1346.6,844.3 L1349.1,847.4 L1350.6,850.9 L1351.2,854.4 L1350.6,857.7 L1349.1,860.3 L1346.6,862.0 L1343.6,862.7 L1340.2,862.2 L1301.5,851.1 L1298.1,849.6 L1295.1,847.1 L1292.7,844.0 L1291.1,840.5 L1290.6,836.9 L1291.1,833.7 L1292.7,831.1 L1295.1,829.4 L1298.1,828.7 L1301.5,829.1Z" fill="#9da29d" stroke="#061a08" stroke-width="0.9"/>
<ellipse cx="1314.0" cy="854.2" rx="6.5" ry="1.5" transform="rotate(17 1314.0 854.2)" fill="#e8e8e8"/>
<path d="M1285.7,864.9 L1301.5,851.1 M1324.3,876.1 L1340.2,862.2" stroke="#061a08" stroke-width="0.9"/>
</g>
<path d="M999.2,424.0 L999.0,421.1 L998.7,417.0 L998.4,412.3 L998.3,408.0 L998.5,404.1 L998.8,400.2 L999.2,396.4 L999.9,392.7 L1000.8,389.0 L1001.9,385.2 L1003.1,381.7 L1004.5,378.4 L1005.9,375.5 L1007.5,372.9 L1009.2,370.4 L1011.0,368.0 L1013.1,365.6 L1015.3,363.2 L1017.7,361.0 L1020.0,358.9 L1022.2,357.0 L1024.5,355.3 L1026.7,353.7 L1029.1,352.4 L1031.6,351.3 L1034.2,350.5 L1036.9,349.8 L1039.5,349.2 L1042.0,348.7 L1044.5,348.3 L1047.1,347.8 L1049.9,347.3 L1053.0,346.6 L1056.2,345.8 L1059.6,344.9 L1062.9,344.0 L1066.1,343.0 L1069.4,342.0 L1072.6,340.8 L1075.8,339.5 L1079.3,337.7 L1083.1,335.6 L1086.5,333.7 L1088.8,332.3 L1090.9,331.1 L1093.0,329.7 L1095.2,328.2 L1097.4,326.5 L1099.6,324.6 L1101.8,322.5 L1104.0,320.3 L1106.3,317.9 L1108.5,315.3 L1110.7,312.5 L1113.0,309.5 L1115.2,306.4 L1117.3,303.0 L1119.5,299.5 L1151.5,247.6 L1152.5,246.1 L1153.5,244.8 L1154.5,243.6 L1155.5,242.4 L1156.6,241.4 L1157.7,240.5 L1158.8,239.7 L1160.0,239.0 L1161.2,238.4 L1162.5,237.9 L1163.8,237.5 L1165.1,237.2 L1166.5,236.9 L1168.0,236.8 L1169.7,236.7 L1171.2,236.8 L1172.7,237.0 L1174.2,237.4 L1175.5,237.9 L1176.8,238.5 L1178.0,239.2 L1179.1,240.0 L1180.2,240.9 L1181.2,241.8 L1182.1,242.8 L1183.0,243.8 L1183.9,244.9 L1184.7,245.9 L1357.0,427.0 L1361.4,432.0 L1365.5,437.3 L1369.4,442.8 L1373.0,448.7 L1376.3,454.7 L1379.2,460.9 L1381.8,467.2 L1384.1,473.5 L1386.0,479.8 L1387.4,486.1 L1388.5,492.3 L1389.1,498.4 L1389.3,504.3 L1389.0,510.0 L1367.0,765.0 L1367.0,918.7 L1021.2,820.9Z M1144.5,454.4 A72.89 54.67 -130.93 1 0 1018.3,418.0 A72.89 54.67 -130.93 1 0 1144.5,454.4Z M1368.7,502.0 A72.89 54.67 -130.93 1 0 1242.5,465.6 A72.89 54.67 -130.93 1 0 1368.7,502.0Z M1183.9,262.7 A12.68 9.51 -130.93 1 0 1161.9,256.3 A12.68 9.51 -130.93 1 0 1183.9,262.7Z M1100.3,677.1 L1103.7,678.6 L1106.8,681.1 L1109.2,684.2 L1110.8,687.7 L1111.3,691.2 L1110.8,694.5 L1109.2,697.1 L1106.8,698.8 L1103.7,699.5 L1100.3,699.1 L1061.7,687.9 L1058.3,686.4 L1055.2,683.9 L1052.8,680.8 L1051.2,677.3 L1050.7,673.8 L1051.2,670.5 L1052.8,667.9 L1055.2,666.2 L1058.3,665.5 L1061.7,665.9Z M1324.3,742.0 L1327.7,743.5 L1330.8,746.0 L1333.2,749.1 L1334.8,752.6 L1335.3,756.1 L1334.8,759.4 L1333.2,762.0 L1330.8,763.7 L1327.7,764.4 L1324.3,764.0 L1285.7,752.8 L1282.3,751.3 L1279.2,748.8 L1276.8,745.7 L1275.2,742.2 L1274.7,738.7 L1275.2,735.4 L1276.8,732.8 L1279.2,731.1 L1282.3,730.4 L1285.7,730.8Z M1100.3,789.2 L1103.7,790.7 L1106.8,793.2 L1109.2,796.3 L1110.8,799.8 L1111.3,803.3 L1110.8,806.6 L1109.2,809.2 L1106.8,810.9 L1103.7,811.6 L1100.3,811.2 L1061.7,800.0 L1058.3,798.5 L1055.2,796.0 L1052.8,792.9 L1051.2,789.4 L1050.7,785.9 L1051.2,782.6 L1052.8,780.0 L1055.2,778.3 L1058.3,777.6 L1061.7,778.0Z M1324.3,854.1 L1327.7,855.6 L1330.8,858.1 L1333.2,861.2 L1334.8,864.7 L1335.3,868.2 L1334.8,871.5 L1333.2,874.1 L1330.8,875.8 L1327.7,876.5 L1324.3,876.1 L1285.7,864.9 L1282.3,863.4 L1279.2,860.9 L1276.8,857.8 L1275.2,854.3 L1274.7,850.8 L1275.2,847.5 L1276.8,844.9 L1279.2,843.2 L1282.3,842.5 L1285.7,842.9Z" fill="#275929" fill-rule="evenodd" stroke="#061a08" stroke-width="1.2" stroke-linejoin="round"/>
<path d="M937.9,491.5 L1610.1,685.5 L1610.1,909.5 L937.9,715.5Z" fill="#336336" clip-path="url(#spface)"/>
<path d="M999.2,424.0 L999.0,421.1 L998.7,417.0 L998.4,412.3 L998.3,408.0 L998.5,404.1 L998.8,400.2 L999.2,396.4 L999.9,392.7 L1000.8,389.0 L1001.9,385.2 L1003.1,381.7 L1004.5,378.4 L1005.9,375.5 L1007.5,372.9 L1009.2,370.4 L1011.0,368.0 L1013.1,365.6 L1015.3,363.2 L1017.7,361.0 L1020.0,358.9 L1022.2,357.0 L1024.5,355.3 L1026.7,353.7 L1029.1,352.4 L1031.6,351.3 L1034.2,350.5 L1036.9,349.8 L1039.5,349.2 L1042.0,348.7 L1044.5,348.3 L1047.1,347.8 L1049.9,347.3 L1053.0,346.6 L1056.2,345.8 L1059.6,344.9 L1062.9,344.0 L1066.1,343.0 L1069.4,342.0 L1072.6,340.8 L1075.8,339.5 L1079.3,337.7 L1083.1,335.6 L1086.5,333.7 L1088.8,332.3 L1090.9,331.1 L1093.0,329.7 L1095.2,328.2 L1097.4,326.5 L1099.6,324.6 L1101.8,322.5 L1104.0,320.3 L1106.3,317.9 L1108.5,315.3 L1110.7,312.5 L1113.0,309.5 L1115.2,306.4 L1117.3,303.0 L1119.5,299.5 L1151.5,247.6 L1152.5,246.1 L1153.5,244.8 L1154.5,243.6 L1155.5,242.4 L1156.6,241.4 L1157.7,240.5 L1158.8,239.7 L1160.0,239.0 L1161.2,238.4 L1162.5,237.9 L1163.8,237.5 L1165.1,237.2 L1166.5,236.9 L1168.0,236.8 L1169.7,236.7 L1171.2,236.8 L1172.7,237.0 L1174.2,237.4 L1175.5,237.9 L1176.8,238.5 L1178.0,239.2 L1179.1,240.0 L1180.2,240.9 L1181.2,241.8 L1182.1,242.8 L1183.0,243.8 L1183.9,244.9 L1184.7,245.9 L1357.0,427.0 L1361.4,432.0 L1365.5,437.3 L1369.4,442.8 L1373.0,448.7 L1376.3,454.7 L1379.2,460.9 L1381.8,467.2 L1384.1,473.5 L1386.0,479.8 L1387.4,486.1 L1388.5,492.3 L1389.1,498.4 L1389.3,504.3 L1389.0,510.0 L1367.0,765.0 L1367.0,918.7 L1021.2,820.9Z M1144.5,454.4 A72.89 54.67 -130.93 1 0 1018.3,418.0 A72.89 54.67 -130.93 1 0 1144.5,454.4Z M1368.7,502.0 A72.89 54.67 -130.93 1 0 1242.5,465.6 A72.89 54.67 -130.93 1 0 1368.7,502.0Z M1183.9,262.7 A12.68 9.51 -130.93 1 0 1161.9,256.3 A12.68 9.51 -130.93 1 0 1183.9,262.7Z M1100.3,677.1 L1103.7,678.6 L1106.8,681.1 L1109.2,684.2 L1110.8,687.7 L1111.3,691.2 L1110.8,694.5 L1109.2,697.1 L1106.8,698.8 L1103.7,699.5 L1100.3,699.1 L1061.7,687.9 L1058.3,686.4 L1055.2,683.9 L1052.8,680.8 L1051.2,677.3 L1050.7,673.8 L1051.2,670.5 L1052.8,667.9 L1055.2,666.2 L1058.3,665.5 L1061.7,665.9Z M1324.3,742.0 L1327.7,743.5 L1330.8,746.0 L1333.2,749.1 L1334.8,752.6 L1335.3,756.1 L1334.8,759.4 L1333.2,762.0 L1330.8,763.7 L1327.7,764.4 L1324.3,764.0 L1285.7,752.8 L1282.3,751.3 L1279.2,748.8 L1276.8,745.7 L1275.2,742.2 L1274.7,738.7 L1275.2,735.4 L1276.8,732.8 L1279.2,731.1 L1282.3,730.4 L1285.7,730.8Z M1100.3,789.2 L1103.7,790.7 L1106.8,793.2 L1109.2,796.3 L1110.8,799.8 L1111.3,803.3 L1110.8,806.6 L1109.2,809.2 L1106.8,810.9 L1103.7,811.6 L1100.3,811.2 L1061.7,800.0 L1058.3,798.5 L1055.2,796.0 L1052.8,792.9 L1051.2,789.4 L1050.7,785.9 L1051.2,782.6 L1052.8,780.0 L1055.2,778.3 L1058.3,777.6 L1061.7,778.0Z M1324.3,854.1 L1327.7,855.6 L1330.8,858.1 L1333.2,861.2 L1334.8,864.7 L1335.3,868.2 L1334.8,871.5 L1333.2,874.1 L1330.8,875.8 L1327.7,876.5 L1324.3,876.1 L1285.7,864.9 L1282.3,863.4 L1279.2,860.9 L1276.8,857.8 L1275.2,854.3 L1274.7,850.8 L1275.2,847.5 L1276.8,844.9 L1279.2,843.2 L1282.3,842.5 L1285.7,842.9Z" fill="none" stroke="#061a08" stroke-width="1.4" stroke-linejoin="round"/>
<path d="M1184.7,245.9 L1200.6,232.1" stroke="#061a08" stroke-width="1" fill="none"/>
<path d="M1357.0,427.0 L1372.9,413.2" stroke="#061a08" stroke-width="1" fill="none"/>
<path d="M1389.0,510.0 L1404.9,496.2" stroke="#061a08" stroke-width="1" fill="none"/>
<path d="M1367.0,765.0 L1382.9,751.2" stroke="#061a08" stroke-width="1" fill="none"/>
</g>
<g id="sketch" fill="none" stroke-width="1.2" stroke-dasharray="22 4 3 4">
<path d="M1115.6,151.9 A45.73 34.29 -130.93 1 0 1036.4,129.1 A45.73 34.29 -130.93 1 0 1115.6,151.9Z" stroke="#aeb2ae" stroke-opacity="0.9"/>
<path d="M988.1,362.6 A45.47 34.10 -130.93 1 0 909.4,339.9 A45.47 34.10 -130.93 1 0 988.1,362.6Z" stroke="#aeb2ae" stroke-opacity="0.9"/>
<path d="M1206.8,378.9 A51.55 38.66 -130.93 1 0 1117.6,353.1 A51.55 38.66 -130.93 1 0 1206.8,378.9Z" stroke="#aeb2ae" stroke-opacity="0.9"/>
<path d="M1339.2,417.1 A204.37 153.28 -130.93 1 0 985.2,314.9 A204.37 153.28 -130.93 1 0 1339.2,417.1Z" stroke="#aeb2ae" stroke-opacity="0.9"/>
<path d="M1565.0,465.5 A206.96 155.22 -130.93 1 0 1206.5,362.0 A206.96 155.22 -130.93 1 0 1565.0,465.5Z" stroke="#aeb2ae" stroke-opacity="0.9"/>
<path d="M1207.6,178.5 A151.99 113.99 -130.93 1 0 944.4,102.5 A151.99 113.99 -130.93 1 0 1207.6,178.5Z" stroke="#aeb2ae" stroke-opacity="0.9"/>
<path d="M1079.8,389.1 A151.34 113.50 -130.93 1 0 817.7,313.4 A151.34 113.50 -130.93 1 0 1079.8,389.1Z" stroke="#aeb2ae" stroke-opacity="0.9"/>
<path d="M1459.1,434.9 A84.72 63.54 -130.93 1 0 1312.4,392.6 A84.72 63.54 -130.93 1 0 1459.1,434.9Z" stroke="#aeb2ae" stroke-opacity="0.9"/>
</g>
<circle cx="1076.0" cy="140.5" r="2.2" fill="#9a9a9a"/>
<circle cx="948.8" cy="351.2" r="2.2" fill="#9a9a9a"/>
<circle cx="1162.2" cy="366.0" r="2.2" fill="#9a9a9a"/>
<circle cx="1385.8" cy="413.8" r="2.2" fill="#9a9a9a"/>
</svg>
<div id="hdr"><svg class="abs" style="left:12.0px;top:6.0px;" width="28" height="28" viewBox="0 0 28 28"><path d="M14 0.500l12 7v13.500l-12 7-12-7v-13.500z" fill="#58b947"/><path d="M14 5.500l7.500 4.300v8.500l-7.500 4.300-7.500-4.300v-8.500z" fill="#ebebeb"/><path d="M14 7.800l5.500 3.200v6.200l-5.500 3.200-5.500-3.200v-6.200z" fill="none" stroke="#6a6a6a" stroke-width="1.600"/><path d="M2 7.500l7 4M26 7.500l-6.500 3.500M14 28v-7" stroke="#ebebeb" stroke-width="1.400"/><path d="M14 0.500v6M2 21l6-3.500M26 21l-6-3.500" stroke="#3f9a35" stroke-width="1.200"/></svg>
<span class="t" style="left:47.8px;top:7.7px;font-size:21.8px;color:#727272;transform:scaleX(1.030);letter-spacing:0px;font-weight:normal;-webkit-text-stroke:0.300px #ebebeb;">onshape</span>
<div class="abs" style="left:146px;top:13px;width:17px;height:3px;background:#2b2b2b;box-shadow:0 6.500px 0 #2b2b2b,0 13px 0 #2b2b2b"></div>
<span class="t" style="left:175.5px;top:10.5px;font-size:21.6px;color:#2f2f2f;font-weight:bold;transform:scaleX(0.988);">1C - Practice Exercise Solutions</span>
<span class="t" style="left:508.0px;top:15.3px;font-size:16.5px;color:#9c9c9c;transform:scaleX(0.936);">FRCDesignLib Rework</span>
<svg class="abs" style="left:678.0px;top:13.0px;" width="16" height="16" viewBox="0 0 16 16"><g fill="none" stroke="#444" stroke-width="1.700" stroke-linecap="round"><path d="M7 9l-2.500 2.500a2.800 2.800 0 0 1-4-4l2.800-2.800a2.800 2.800 0 0 1 4 0" transform="translate(1.500 1.500)"/><path d="M6 4l2.500-2.500a2.800 2.800 0 0 1 4 4l-2.800 2.800a2.800 2.800 0 0 1-4 0" transform="translate(1.500 1.500)"/></g></svg>
<svg class="abs" style="left:703.0px;top:12.5px;" width="18" height="18" viewBox="0 0 18 18"><path d="M1 2.500h5.500l1.500 2h9v9.500h-16z" fill="#f3f3f3" stroke="#a8a8a8" stroke-width="1.200" stroke-linejoin="round"/></svg>
<span class="t" style="left:726.5px;top:13.0px;font-size:16.5px;color:#a2a2a2;transform:scaleX(0.900);">Stage 1</span>
<svg class="abs" style="left:828.0px;top:10.5px;" width="20" height="20" viewBox="0 0 20 20"><path d="M10 2.500l9.500 4.500-9.500 4.500-9.500-4.500z" fill="#1f5fb0"/><path d="M4.500 10v4.500c3 2.500 8 2.500 11 0v-4.500l-5.500 2.600z" fill="#1f5fb0"/><path d="M2.500 8v6.500" stroke="#1f5fb0" stroke-width="1.300"/><path d="M1.500 14.500h2l.5 3h-3z" fill="#1f5fb0"/></svg>
<svg class="abs" style="left:856.0px;top:10.5px;" width="20" height="20" viewBox="0 0 20 20"><circle cx="10" cy="10" r="8.200" fill="#f4f4f4" stroke="#2b2b2b" stroke-width="1.400"/><path d="M5 4.500c1.500-.8 3.500-.3 4.500 1s-.8 2-1 3.300 1.800 1.500 1.800 3-1 2.700-2 3.700c-1-.5-1.300-2-1.500-3.500s-2-2-2.500-3.500.200-3 .700-4zM12.500 2.500c1.800.6 3.500 2 4.500 4-1 .3-1.500 1.200-2.500 1s-2.500-1.300-2.700-2.500.200-2 .700-2.500zM14.500 11c1.200 0 2.300.5 2.800 1.200-.4 1.300-1.200 2.500-2.300 3.300-.8-.8-1.200-2-1.200-2.800s.300-1.700.700-1.700z" fill="#2b2b2b"/></svg>
<svg class="abs" style="left:883.0px;top:11.0px;" width="20" height="20" viewBox="0 0 20 20"><path d="M2 3.500h9.500v14h-9.500z" fill="none" stroke="#2b2b2b" stroke-width="1.700"/><path d="M4.500 1.500h4.500v3h-4.500z" fill="#2b2b2b"/><path d="M8 7.500h6l3.500 3.500v7.500h-9.500z" fill="#ebebeb" stroke="#2b2b2b" stroke-width="1.700" stroke-linejoin="round"/></svg>
<span class="t" style="left:909.3px;top:12.1px;font-size:15.0px;color:#333;transform:scaleX(0.919);">441</span>
<svg class="abs" style="left:946.0px;top:11.0px;" width="20" height="20" viewBox="0 0 20 20"><circle cx="10" cy="10" r="2.900" fill="#2b2b2b"/><path d="M10 1v18" stroke="#2b2b2b" stroke-width="1.600" stroke-dasharray="2.200 1.600"/></svg>
<span class="t" style="left:971.7px;top:12.1px;font-size:15.0px;color:#333;transform:scaleX(0.968);">4008</span>
<svg class="abs" style="left:1017.0px;top:10.5px;" width="20" height="20" viewBox="0 0 20 20"><path d="M1.500 9h3.500v9h-3.500zM5 9.500c2-1.500 3.500-4 3.500-7.500 2.500 0 3.500 2 2.500 6h6c1.500 0 2 1.500 1.500 2.500l-2 6c-.5 1-1 1.500-2.500 1.500h-9" fill="none" stroke="#2b2b2b" stroke-width="1.600" stroke-linejoin="round"/></svg>
<span class="t" style="left:1043.0px;top:12.1px;font-size:15.0px;color:#333;transform:scaleX(0.839);">3</span>
<svg class="abs" style="left:1515.0px;top:11.0px;" width="20" height="20" viewBox="0 0 20 20"><path d="M5 2c-2.500 0-2.500 1.500-2.500 4s0 3.500-1.800 4c1.800.5 1.800 2 1.800 4s0 4 2.500 4M15 2c2.500 0 2.500 1.500 2.500 4s0 3.500 1.800 4c-1.800.5-1.800 2-1.800 4s0 4-2.500 4" fill="none" stroke="#2b2b2b" stroke-width="2"/><path d="M6.500 10.500l2.500 3 4.500-6.500" fill="none" stroke="#2b2b2b" stroke-width="2.100"/></svg>
<svg class="abs" style="left:1547.0px;top:12.0px;" width="20" height="20" viewBox="0 0 20 20"><path d="M10 2c3.500 0 5.500 2.500 5.500 6v4.500l2 3h-15l2-3v-4.500c0-3.500 2-6 5.500-6z" fill="#2b2b2b"/><path d="M8 17h4a2 2 0 0 1-4 0z" fill="#2b2b2b"/></svg>
<div class="abs" style="left:1557.500px;top:6px;width:16.500px;height:16px;background:#1b5fb8;border-radius:3px"></div>
<span class="t" style="left:1559.5px;top:8.9px;font-size:10.5px;color:#fff;font-weight:bold;transform:scaleX(1.044);">9+</span>
<svg class="abs" style="left:1579.0px;top:11.0px;" width="20" height="20" viewBox="0 0 20 20"><rect x="2" y="1.500" width="14.500" height="17" rx="1" fill="none" stroke="#2b2b2b" stroke-width="1.500"/><path d="M9.500 5.500h5M9.500 10h5M9.500 14.500h5" stroke="#2b2b2b" stroke-width="1.400"/><path d="M4 5.300l1.300 1.300 2.200-2.600M4 9.800l1.300 1.300 2.200-2.600M4 14.300l1.300 1.300 2.200-2.600" fill="none" stroke="#2b2b2b" stroke-width="1.200"/></svg>
<svg class="abs" style="left:1611.0px;top:11.0px;" width="20" height="20" viewBox="0 0 20 20"><rect x="1.500" y="2" width="6.500" height="6.500" fill="none" stroke="#2b2b2b" stroke-width="1.700"/><rect x="1.500" y="11.500" width="6.500" height="6.500" fill="none" stroke="#2b2b2b" stroke-width="1.700"/><rect x="11" y="11.500" width="6.500" height="6.500" fill="none" stroke="#2b2b2b" stroke-width="1.700"/><path d="M14.300 1v8.500M10 5.200h8.500" stroke="#2b2b2b" stroke-width="1.900"/></svg>
<svg class="abs" style="left:1643.0px;top:11.0px;" width="20" height="20" viewBox="0 0 20 20"><path d="M10.500 1.500c5 0 8 3.500 8 7.500 0 3-1.500 5-3 6.500v4h-8v-2.500h-2c-1 0-1.500-.5-1.500-1.500v-3l-2-1 2-3.500c0-4 2.500-6.500 6.500-6.500z" fill="#2b2b2b"/><circle cx="10" cy="8" r="2.600" fill="none" stroke="#ebebeb" stroke-width="1.500" stroke-dasharray="1.600 1.100"/><circle cx="14" cy="11" r="1.500" fill="none" stroke="#ebebeb" stroke-width="1.100" stroke-dasharray="1 .8"/></svg>
<div class="abs" style="left:1673.300px;top:3.300px;width:59px;height:32.500px;background:#1b5cb8;border-radius:4px"></div>
<span class="t" style="left:1685.0px;top:12.9px;font-size:16.8px;color:#fff;font-weight:bold;transform:scaleX(0.773);">Share</span>
<svg class="abs" style="left:1742.0px;top:11.0px;" width="20" height="20" viewBox="0 0 20 20"><circle cx="10" cy="10" r="8.800" fill="#222"/><text x="10" y="15.300" text-anchor="middle" font-family="Liberation Sans,sans-serif" font-weight="bold" font-size="15" fill="#ebebeb">?</text></svg>
<div class="abs" style="left:1768.500px;top:19.500px;border-left:4.500px solid transparent;border-right:4.500px solid transparent;border-top:5px solid #2b2b2b"></div>
<svg class="abs" style="left:1789.0px;top:10.0px;" width="24" height="24" viewBox="0 0 24 24"><rect width="24" height="24" rx="2" fill="#0b0b0b"/><path d="M12 3l7.500 4.300v9.400l-7.500 4.300-7.500-4.300v-9.400z" fill="none" stroke="#1fb5ad" stroke-width="1.800"/><path d="M16 8.500l-4-2.300-4 2.300 8 5-4 2.500-4-2.500" fill="none" stroke="#1fb5ad" stroke-width="1.800"/></svg>
<span class="t" style="left:1819.0px;top:14.3px;font-size:16.0px;color:#2f2f2f;transform:scaleX(0.857);">Andrew Card</span>
<div class="abs" style="left:1906px;top:18.500px;border-left:4.500px solid transparent;border-right:4.500px solid transparent;border-top:5px solid #2b2b2b"></div></div>
<div id="tb"><svg class="abs" style="left:7.0px;top:8.0px;" width="20" height="20" viewBox="0 0 20 20"><path d="M8.800 2L8.800 5.600C14.500 5.600 17.300 8.600 16.800 13.500C16.600 15 15.800 16.200 14.800 16.600C15 12.500 13 10.800 8.800 10.600L8.800 14.200L3.200 7.900Z" fill="#2b2b2b"/></svg>
<svg class="abs" style="left:42.2px;top:8.0px;" width="20" height="20" viewBox="0 0 20 20"><path d="M11.200 2L11.200 5.600C5.500 5.600 2.700 8.600 3.200 13.500C3.400 15 4.200 16.200 5.200 16.600C5 12.500 7 10.800 11.200 10.600L11.200 14.200L16.800 7.900Z" fill="#9a9a9a"/></svg>
<svg class="abs" style="left:80.5px;top:8.0px;" width="20" height="20" viewBox="0 0 20 20"><path d="M3.500 13.500l9.500-11 3 2.500-9.500 11-4 1.800z" fill="#fff" stroke="#333" stroke-width="1.200" stroke-linejoin="round"/><path d="M12 3.500l3 2.500" stroke="#333" stroke-width="1"/><path d="M0.500 18.800h18" stroke="#2a5fa8" stroke-width="1.400"/></svg>
<svg class="abs" style="left:169.0px;top:8.0px;" width="20" height="20" viewBox="0 0 20 20"><path d="M1.5 1.5h13l3.5 3.5v13.5h-13l-3.5-3.5z" fill="#fff" stroke="#333" stroke-width="1.2" stroke-linejoin="round"/><path d="M1.5 1.5l3.5 3.5h13M5 5v13.5" fill="none" stroke="#333" stroke-width="1.2"/><path d="M7.5 9h10v9.5h-10z" fill="#8a8a8a" stroke="#555"/><path d="M7.5 9l2 2h8M9.5 11v7.5" stroke="#666" fill="none" stroke-width=".8"/></svg>
<svg class="abs" style="left:203.0px;top:8.0px;" width="20" height="20" viewBox="0 0 20 20"><path d="M10 10L17.5 5.2A9 9 0 1 0 17.5 14.8Z" fill="#8a8a8a" stroke="#444" stroke-width="1.1"/><ellipse cx="14.6" cy="6.6" rx="2.6" ry="1.5" transform="rotate(-33 14.6 6.6)" fill="#fff" stroke="#444" stroke-width=".8"/><ellipse cx="14.6" cy="13.4" rx="2.6" ry="1.5" transform="rotate(33 14.6 13.4)" fill="#fff" stroke="#444" stroke-width=".8"/><path d="M8 10h11.5" stroke="#222" stroke-width="1.1" stroke-dasharray="2.5 1.2"/></svg>
<svg class="abs" style="left:237.5px;top:8.0px;" width="20" height="20" viewBox="0 0 20 20"><path d="M4 17C3 7 16 15 16 4" stroke="#444" stroke-width="6.6" fill="none" stroke-linecap="round"/><path d="M4 17C3 7 16 15 16 4" stroke="#8a8a8a" stroke-width="4.6" fill="none" stroke-linecap="round"/><ellipse cx="16.2" cy="3.3" rx="3" ry="2.1" fill="#fff" stroke="#444" stroke-width=".9"/></svg>
<svg class="abs" style="left:275.0px;top:8.0px;" width="20" height="20" viewBox="0 0 20 20"><path d="M1.5 18.5V9.5a8 8 0 0 1 8-8h9v17z" fill="#fff" stroke="#333" stroke-width="1.2" stroke-linejoin="round"/><path d="M1.5 9.5a8 8 0 0 1 8-8l2 2.6a6 6 0 0 0-7.4 6.9z" fill="#8a8a8a" stroke="#444" stroke-width=".8"/><path d="M4.300 9.500v9" stroke="#333" stroke-width=".9" fill="none"/></svg>
<svg class="abs" style="left:299.5px;top:8.0px;" width="20" height="20" viewBox="0 0 20 20"><path d="M5.500 8l4.500 4.500 4.500-4.500" fill="none" stroke="#333" stroke-width="1.900"/></svg>
<svg class="abs" style="left:327.0px;top:8.0px;" width="20" height="20" viewBox="0 0 20 20"><path d="M1.5 18.5V8.5l7-7h10v17z" fill="#fff" stroke="#333" stroke-width="1.2" stroke-linejoin="round"/><path d="M1.5 8.5l7-7 2.2 2.2-6.6 6.8z" fill="#8a8a8a" stroke="#444" stroke-width=".8"/><path d="M4.300 9v9.500" stroke="#333" stroke-width=".9" fill="none"/></svg>
<svg class="abs" style="left:360.5px;top:8.0px;" width="20" height="20" viewBox="0 0 20 20"><path d="M1.5 1.5h14l3 3v14h-14l-3-3z" fill="#fff" stroke="#333" stroke-width="1.2" stroke-linejoin="round"/><path d="M1.5 1.5l3 3h14M4.5 4.5v14" fill="none" stroke="#333" stroke-width="1.2"/><path d="M7 4.5v11.5h9v-11.5h-2.2v9h-4.6v-9z" fill="#8a8a8a" stroke="#555" stroke-width=".8"/></svg>
<svg class="abs" style="left:395.0px;top:8.0px;" width="20" height="20" viewBox="0 0 20 20"><path d="M1.5 1.5h14l3 3v14h-14l-3-3z" fill="#fff" stroke="#333" stroke-width="1.2" stroke-linejoin="round"/><path d="M1.5 1.5l3 3h14M4.5 4.5v14" fill="none" stroke="#333" stroke-width="1.2"/><circle cx="11.5" cy="11.5" r="4.6" fill="#8a8a8a" stroke="#444"/><circle cx="12.5" cy="10.7" r="2.4" fill="#a5a5a5" stroke="#555" stroke-width=".6"/></svg>
<svg class="abs" style="left:428.0px;top:8.0px;" width="20" height="20" viewBox="0 0 20 20"><path d="M4.5 4v12.5a5.5 2.2 0 0 0 11 0V4" fill="#fff" stroke="#333" stroke-width="1.2"/><path d="M4.5 6.5h11v8.5h-11z" fill="#8a8a8a"/><path d="M4.5 8h11M4.5 10h11M4.5 12h11M4.5 14h11" stroke="#bbb" stroke-width=".7"/><ellipse cx="10" cy="4" rx="5.5" ry="2.2" fill="#e8e8e8" stroke="#333" stroke-width="1.2"/></svg>
<svg class="abs" style="left:463.0px;top:8.0px;" width="20" height="20" viewBox="0 0 20 20"><path d="M1.5 6.5l6-4.5 4 2.5 7-2.5v11.5l-7.5 5-9.5-3.5z" fill="#8a8a8a" stroke="#333" stroke-width="1.1" stroke-linejoin="round"/><path d="M6 7.5h9.5v7l-4 2.5-5.5-2z" fill="#e4e4e4" stroke="#444" stroke-width=".8"/><path d="M11.5 6v6.5M8.6 10.2l2.9 3.4 2.9-3.4z" stroke="#111" stroke-width="1.6" fill="#111"/></svg>
<svg class="abs" style="left:488.0px;top:8.0px;" width="20" height="20" viewBox="0 0 20 20"><path d="M5.500 8l4.500 4.500 4.500-4.500" fill="none" stroke="#333" stroke-width="1.900"/></svg>
<svg class="abs" style="left:519.0px;top:8.0px;" width="20" height="20" viewBox="0 0 20 20"><rect x="1.5" y="1.5" width="8" height="8" fill="#fff" stroke="#333" stroke-width="1.2"/><rect x="10.5" y="1.5" width="8" height="8" fill="#8a8a8a" stroke="#333" stroke-width="1.2"/><rect x="1.5" y="10.5" width="8" height="8" fill="#8a8a8a" stroke="#333" stroke-width="1.2"/><rect x="10.5" y="10.5" width="8" height="8" fill="#8a8a8a" stroke="#333" stroke-width="1.2"/></svg>
<svg class="abs" style="left:543.5px;top:8.0px;" width="20" height="20" viewBox="0 0 20 20"><path d="M5.500 8l4.500 4.500 4.500-4.500" fill="none" stroke="#333" stroke-width="1.900"/></svg>
<svg class="abs" style="left:571.0px;top:8.0px;" width="20" height="20" viewBox="0 0 20 20"><path d="M1.5 2.5l3-1.5h3v17h-3l-3-1.5z" fill="#fff" stroke="#333" stroke-width="1.2" stroke-linejoin="round"/><path d="M12.5 1h3l3 1.5v16h-6z" fill="#8a8a8a" stroke="#333" stroke-width="1.2" stroke-linejoin="round"/><path d="M7.5 3l3 3v6l2 2.5" fill="none" stroke="#999" stroke-width="1"/><path d="M4.5 1v17" stroke="#333" stroke-width=".9"/></svg>
<svg class="abs" style="left:609.0px;top:8.0px;" width="20" height="20" viewBox="0 0 20 20"><circle cx="6.8" cy="10" r="5.8" fill="#fff" stroke="#333" stroke-width="1.2"/><circle cx="13.2" cy="10" r="5.8" fill="#8a8a8a" fill-opacity=".9" stroke="#333" stroke-width="1.2"/><path d="M10 5.1a5.8 5.8 0 0 1 0 9.8" fill="none" stroke="#333" stroke-width=".9"/></svg>
<svg class="abs" style="left:642.0px;top:8.0px;" width="20" height="20" viewBox="0 0 20 20"><rect x="2" y="10" width="8" height="8" rx="1" fill="#fff" stroke="#333" stroke-width="1.2"/><path d="M13.5 1.5l4.5 5-4.5 5-4.5-5z" fill="#8a8a8a" stroke="#333" stroke-width="1.2"/><path d="M4 8c0-3 1.500-4.500 3.500-5M15 13c1 2 0 4-2.500 5.500" fill="none" stroke="#333" stroke-width="1.1"/><path d="M6 1.500l3 1.500-2.500 2zM14.500 19l-3-.5 2-2.500z" fill="#222"/></svg>
<svg class="abs" style="left:667.5px;top:8.0px;" width="20" height="20" viewBox="0 0 20 20"><path d="M5.500 8l4.500 4.500 4.500-4.500" fill="none" stroke="#333" stroke-width="1.900"/></svg>
<svg class="abs" style="left:699.0px;top:8.0px;" width="20" height="20" viewBox="0 0 20 20"><path d="M2 2l16 2.500v14.500l-15.500-2.500z" fill="#d9d9d9" stroke="#333" stroke-width="1.2" stroke-linejoin="round"/><path d="M10 3.200l8 1.300v7l-8-1z" fill="#fff" stroke="#444" stroke-width=".9"/></svg>
<svg class="abs" style="left:733.0px;top:8.0px;" width="20" height="20" viewBox="0 0 20 20"><circle cx="10" cy="10" r="8.500" fill="#fff" stroke="#333" stroke-width="1.2"/><circle cx="10" cy="10" r="6.300" fill="none" stroke="#666" stroke-width=".9"/><path d="M10 3.500v6.500h6.500" fill="none" stroke="#333" stroke-width="1.300"/></svg>
<svg class="abs" style="left:766.5px;top:8.0px;" width="20" height="20" viewBox="0 0 20 20"><path d="M2 12l4-3h5.500v-5.500h7v12l-3.500 3h-13z" fill="#fff" stroke="#333" stroke-width="1.2" stroke-linejoin="round"/><path d="M2 12h9.500l3.500-2.500M11.500 12v6.500" fill="none" stroke="#333" stroke-width=".9"/><path d="M1.500 1.500h5l3 4.500M6 6.500h4v-4" fill="none" stroke="#222" stroke-width="1.500"/></svg>
<svg class="abs" style="left:868.5px;top:8.0px;" width="20" height="20" viewBox="0 0 20 20"><g fill="#fff" stroke="#555" stroke-width=".9" stroke-linejoin="round"><path d="M10 1l4.500 2.300v4.700l-4.500 2.300-4.500-2.300v-4.700z"/><path d="M5.500 3.300l4.500 2.300 4.500-2.300M10 5.600v4.700"/><path d="M5.300 9.500l4.500 2.300v4.700l-4.500 2.300-4.500-2.300v-4.700z"/><path d="M.8 11.800l4.500 2.300 4.500-2.300M5.300 14.100v4.700"/><path d="M14.700 9.500l4.500 2.300v4.700l-4.500 2.300-4.500-2.300v-4.700z"/><path d="M10.200 11.800l4.500 2.300 4.500-2.300M14.700 14.100v4.700"/></g></svg>
<svg class="abs" style="left:906.0px;top:8.0px;" width="20" height="20" viewBox="0 0 20 20"><path d="M10 1.500l8 4v9l-8 4-8-4v-9z" fill="#fff" stroke="#333" stroke-width="1.2" stroke-linejoin="round"/><path d="M10 9.500l8-4v9l-8 4z" fill="#d9d9d9" stroke="#333" stroke-width="1"/><path d="M2 5.500l8 4" stroke="#333" stroke-width="1"/></svg>
<svg class="abs" style="left:940.5px;top:8.0px;" width="20" height="20" viewBox="0 0 20 20"><path d="M2 7.500l16-1.500 1 9.500-16.500 2z" fill="#2b2b2b"/><path d="M1 10.500l1.500-.2.400 4-1.500.2zM18.300 9l1.500-.2.400 4-1.500.2z" fill="#2b2b2b"/><circle cx="7" cy="11.800" r="2.300" fill="#fff"/><circle cx="13.200" cy="11" r="2.300" fill="#fff"/><circle cx="7.600" cy="12.200" r="1.100" fill="#2b2b2b"/><circle cx="13.800" cy="11.400" r="1.100" fill="#2b2b2b"/><path d="M9 15.500c1.500.8 3.500.3 4.500-1" stroke="#fff" stroke-width=".9" fill="none"/><path d="M10 6.500v-4" stroke="#2b2b2b" stroke-width="1.200"/><circle cx="10" cy="2.300" r="1.200" fill="#2b2b2b"/><path d="M5 2l1.500 2.500M6.500 2l-1.500 2.500M13.500 2l1.500 2.500M15 2l-1.500 2.500" stroke="#777" stroke-width=".8"/></svg>
<svg class="abs" style="left:974.0px;top:8.0px;" width="20" height="20" viewBox="0 0 20 20"><g fill="none" stroke="#d0d0d0" stroke-width="1.300"><ellipse cx="6" cy="6" rx="4" ry="5" transform="rotate(-35 6 6)"/><path d="M3 10l11.500 7M9.500 2.500l7.500 10"/><circle cx="15.500" cy="15" r="2.600"/></g></svg>
<svg class="abs" style="left:1008.0px;top:8.0px;" width="20" height="20" viewBox="0 0 20 20"><path d="M2 7.500l16-1.500 1 9.500-16.500 2z" fill="#2b2b2b"/><path d="M1 10.500l1.500-.2.400 4-1.500.2zM18.300 9l1.500-.2.400 4-1.500.2z" fill="#2b2b2b"/><circle cx="7" cy="11.800" r="2.300" fill="#fff"/><circle cx="13.200" cy="11" r="2.300" fill="#fff"/><circle cx="7.600" cy="12.200" r="1.100" fill="#2b2b2b"/><circle cx="13.800" cy="11.400" r="1.100" fill="#2b2b2b"/><path d="M9 15.500c1.500.8 3.500.3 4.500-1" stroke="#fff" stroke-width=".9" fill="none"/><path d="M10 6.500v-4" stroke="#2b2b2b" stroke-width="1.200"/><circle cx="10" cy="2.300" r="1.200" fill="#2b2b2b"/><path d="M5 2l1.500 2.500M6.500 2l-1.500 2.500M13.500 2l1.500 2.500M15 2l-1.500 2.500" stroke="#777" stroke-width=".8"/></svg>
<svg class="abs" style="left:1042.5px;top:8.0px;" width="20" height="20" viewBox="0 0 20 20"><path d="M2 4l3.500-2.500h13v13.500l-3.500 3h-13z" fill="#777" stroke="#555" stroke-width="1" stroke-linejoin="round"/><path d="M2 4h13v14M15 4l3.500-2.500" stroke="#aaa" stroke-width=".8" fill="none"/><path d="M8.500 4v14M2 11h13" stroke="#999" stroke-width=".7"/><path d="M2 4l3.500-2.500h13l-3.500 2.500z" fill="#e5e5e5" stroke="#888" stroke-width=".6"/></svg>
<svg class="abs" style="left:1076.5px;top:8.0px;" width="20" height="20" viewBox="0 0 20 20"><circle cx="10" cy="10" r="5.800" fill="none" stroke="#666" stroke-width="3.200"/><path d="M1 1.500h5M14 1.500h5M1 18.500h18" stroke="#666" stroke-width="2.400"/><path d="M3 2l4 4.500M17 2l-4 4.500M3.500 18l3.500-4.500M16.500 18l-3.500-4.500" stroke="#666" stroke-width="2.600"/></svg>
<svg class="abs" style="left:1110.5px;top:8.0px;" width="20" height="20" viewBox="0 0 20 20"><g transform="translate(10 10)"><g fill="#555"><rect x="-2" y="-9.500" width="4" height="19" rx=".8"/><rect x="-2" y="-9.500" width="4" height="19" rx=".8" transform="rotate(45)"/><rect x="-2" y="-9.500" width="4" height="19" rx=".8" transform="rotate(90)"/><rect x="-2" y="-9.500" width="4" height="19" rx=".8" transform="rotate(135)"/></g><circle r="6.800" fill="#555"/><circle r="3.100" fill="#fff" stroke="#222" stroke-width=".8"/><circle r="7" fill="none" stroke="#222" stroke-width="0"/></g></svg>
<svg class="abs" style="left:1144.5px;top:8.0px;" width="20" height="20" viewBox="0 0 20 20"><path d="M3.500 2.500h13l-5.500 7.500h-2z" fill="#aaa" stroke="#888" stroke-width=".8"/><path d="M5 4.500l5 6.500 5-6.500" fill="none" stroke="#666" stroke-width="1.500"/><path d="M10 10.500v4" stroke="#666" stroke-width="1.800"/><path d="M4.500 14.500h11M4 17.500h12" stroke="#888" stroke-width="1.800" stroke-linecap="round"/></svg>
<svg class="abs" style="left:1182.0px;top:8.0px;" width="20" height="20" viewBox="0 0 20 20"><path d="M2 10.500l7.500-7.500 8 7.500-8 8z" fill="#fff" stroke="#333" stroke-width="1.200" stroke-linejoin="round"/><path d="M2.500 10.500h14.500l-7.500 7.500z" fill="#3a3a3a"/><path d="M4 1l9 8.500" stroke="#333" stroke-width="1.300"/><path d="M18 12c1.300 2.300 1.600 4.200.2 5-1.200.6-2.200-.6-1.500-2.200z" fill="#3a3a3a"/></svg>
<svg class="abs" style="left:1216.5px;top:8.0px;" width="20" height="20" viewBox="0 0 20 20"><rect x="0.600" y="0.600" width="18.800" height="18.800" rx="2.500" fill="#fff" stroke="#777" stroke-width="1"/><text x="10" y="14" text-anchor="middle" font-family="Liberation Sans,sans-serif" font-size="10.500" fill="#333" textLength="15" lengthAdjust="spacingAndGlyphs">SM</text></svg>
<svg class="abs" style="left:1250.5px;top:8.0px;" width="20" height="20" viewBox="0 0 20 20"><path d="M1.500 5.500l16-2 1 11-16 2z" fill="#fff" stroke="#2b2b2b" stroke-width="1.600" stroke-linejoin="round"/><path d="M1.500 5.500l16-2 .4 4.200-16 2z" fill="#2b2b2b"/><path d="M5 6.800l9-1.100" stroke="#ddd" stroke-width="1.400" stroke-dasharray="1.600 .7"/></svg>
<svg class="abs" style="left:1284.5px;top:8.0px;" width="20" height="20" viewBox="0 0 20 20"><rect x="0.600" y="0.600" width="18.800" height="18.800" rx="2.500" fill="#fff" stroke="#777" stroke-width="1"/><text x="10" y="14" text-anchor="middle" font-family="Liberation Sans,sans-serif" font-size="11" fill="#333">Ai</text></svg>
<svg class="abs" style="left:1318.5px;top:8.0px;" width="20" height="20" viewBox="0 0 20 20"><rect x="0.600" y="0.600" width="18.800" height="18.800" rx="2.500" fill="#fff" stroke="#777" stroke-width="1"/><text x="10" y="14" text-anchor="middle" font-family="Liberation Sans,sans-serif" font-size="11" fill="#333">Ds</text></svg>
<svg class="abs" style="left:1356.5px;top:8.0px;" width="20" height="20" viewBox="0 0 20 20"><path d="M2 4.500l4-2.500h2.500v10h3.500v-10h2.500l3.500 3v8c0 3-2 5-4.500 5h-6c-3 0-5.500-2-5.500-5.500z" fill="#fff" stroke="#333" stroke-width="1.2" stroke-linejoin="round"/><path d="M8.500 12l3 3.500h6.500M12 12l3 3" fill="none" stroke="#333" stroke-width=".9"/><path d="M8.500 12h3.500l3.500 3.500h-4z" fill="#8a8a8a"/><path d="M2 4.500c0 10 .5 11 5 11.500" fill="none" stroke="#333" stroke-width=".9"/></svg>
<svg class="abs" style="left:1390.5px;top:8.0px;" width="20" height="20" viewBox="0 0 20 20"><path d="M13 1.500l4.500 3v11c0 2-1 3-3 3h-9l-4.500-4h12z" fill="#d9d9d9" stroke="#333" stroke-width="1.2" stroke-linejoin="round"/><path d="M13 1.500v13l4.500 3.500" fill="none" stroke="#333" stroke-width="1"/><path d="M13 1.500l4.500 3v12.500l-4.500-2.500z" fill="#8a8a8a" stroke="#333" stroke-width=".9"/></svg>
<svg class="abs" style="left:1424.5px;top:8.0px;" width="20" height="20" viewBox="0 0 20 20"><path d="M1 11l8-1.500 5 5.500-8 1.500z" fill="#d9d9d9" stroke="#333" stroke-width="1.2" stroke-linejoin="round"/><path d="M9 9.500l5-6 5 4.500-5 7z" fill="#8a8a8a" stroke="#333" stroke-width="1.2" stroke-linejoin="round"/><path d="M4 2l12 16" stroke="#333" stroke-width="1"/></svg>
<svg class="abs" style="left:1458.5px;top:8.0px;" width="20" height="20" viewBox="0 0 20 20"><path d="M4.500 1.500h13.500v17h-16v-6h6.500v-4h-4c-2 0-3-1.200-3-3s1-4 3-4z" fill="#8a8a8a" stroke="#333" stroke-width="1.2" stroke-linejoin="round"/><path d="M11 1.500h7v17h-9.500v-6h2.500z" fill="#d9d9d9" stroke="#333" stroke-width=".9"/></svg>
<svg class="abs" style="left:1492.5px;top:8.0px;" width="20" height="20" viewBox="0 0 20 20"><path d="M1.700 2h17.300v16.500h-17.300z" fill="#f1f1f1" opacity=".6"/><path d="M1.700 12.500A10.500 10.500 0 0 1 12.200 2H1.700z" fill="#7d7d7d"/><path d="M1.700 18.500v-6A10.500 10.500 0 0 1 12.200 2h6.800" fill="none" stroke="#333" stroke-width="1.300"/></svg>
<svg class="abs" style="left:1526.5px;top:8.0px;" width="20" height="20" viewBox="0 0 20 20"><path d="M2 4.500l2.500-2h11.500v12.500l-3 3.500h-8.500c-1.500 0-2.500-1-2.500-2.500z" fill="#fff" stroke="#333" stroke-width="1.2" stroke-linejoin="round"/><path d="M4.500 2.500v13M4.500 11h6l5 5.500" fill="none" stroke="#333" stroke-width=".9"/><path d="M10.500 11l5 6 .5-8z" fill="#8a8a8a"/><path d="M9.500 5.500l3 3.500 6.500-7" fill="none" stroke="#111" stroke-width="2.200"/></svg>
<svg class="abs" style="left:1561.0px;top:8.0px;" width="20" height="20" viewBox="0 0 20 20"><path d="M1 2.500h17v11.500M18 9.500h-8.500c-3 0-3 4.500 0 4.500h8.500v4.500h-3v-4" fill="none" stroke="#333" stroke-width="1.300"/></svg>
<svg class="abs" style="left:1599.0px;top:8.0px;" width="20" height="20" viewBox="0 0 20 20"><rect x="1" y="1" width="18" height="18" rx="2.500" fill="none" stroke="#222" stroke-width="1.200" stroke-dasharray="3.200 2"/><path d="M10 6.200v7.600M6.200 10h7.600" stroke="#111" stroke-width="1.700"/></svg>
<svg class="abs" style="left:1637.0px;top:8.0px;" width="20" height="20" viewBox="0 0 20 20"><path d="M4 1.500c-2 0-2 1-2 3s0 3.500-1.500 4.500c1.500 1 1.500 2.500 1.500 4.500s0 3.500 2 3.500M16 6.500c1.500 0 1.500 1 1.500 2.500s.5 2 1.500 2c-1 .5-1.500 1-1.500 2.500s0 3.500-1.500 3.500" fill="none" stroke="#333" stroke-width="1.200"/><path d="M10 6.500l5 2.500v5.500l-5 2.500-5-2.500v-5.500z" fill="#fff" stroke="#333" stroke-width="1" stroke-linejoin="round"/><path d="M5 9l5 2.500 5-2.500M10 11.500v5.500" fill="none" stroke="#333" stroke-width=".9"/><circle cx="13.500" cy="4" r="2.100" fill="#111"/><path d="M13.500 1v7" stroke="#111" stroke-width=".9"/></svg>
<svg class="abs" style="left:1657.0px;top:8.0px;" width="20" height="20" viewBox="0 0 20 20"><path d="M5.500 8l4.500 4.500 4.500-4.500" fill="none" stroke="#333" stroke-width="1.900"/></svg>
<div class="abs" style="left:70.1px;top:5.400px;width:1.600px;height:25.400px;background:#cdcdcd"></div>
<div class="abs" style="left:159.1px;top:5.400px;width:1.600px;height:25.400px;background:#cdcdcd"></div>
<div class="abs" style="left:265.1px;top:5.400px;width:1.600px;height:25.400px;background:#cdcdcd"></div>
<div class="abs" style="left:509.1px;top:5.400px;width:1.600px;height:25.400px;background:#cdcdcd"></div>
<div class="abs" style="left:599.1px;top:5.400px;width:1.600px;height:25.400px;background:#cdcdcd"></div>
<div class="abs" style="left:689.1px;top:5.400px;width:1.600px;height:25.400px;background:#cdcdcd"></div>
<div class="abs" style="left:896.1px;top:5.400px;width:1.600px;height:25.400px;background:#cdcdcd"></div>
<div class="abs" style="left:1172.1px;top:5.400px;width:1.600px;height:25.400px;background:#cdcdcd"></div>
<div class="abs" style="left:1346.1px;top:5.400px;width:1.600px;height:25.400px;background:#cdcdcd"></div>
<div class="abs" style="left:1589.1px;top:5.400px;width:1.600px;height:25.400px;background:#cdcdcd"></div>
<div class="abs" style="left:1627.1px;top:5.400px;width:1.600px;height:25.400px;background:#cdcdcd"></div>
<span class="t" style="left:104.4px;top:11.3px;font-size:15.0px;color:#333;transform:scaleX(0.907);">Sketch</span>
<span class="t" style="left:800.5px;top:8.8px;font-size:19.0px;color:#222;font-weight:bold;transform:scaleX(0.948);">(</span><span class="t" style="left:816.0px;top:8.8px;font-size:19.0px;color:#222;font-weight:bold;transform:scaleX(0.948);">)</span>
<span class="t" style="left:806.5px;top:7.5px;font-size:19px;font-weight:bold;font-style:italic;font-family:Liberation Serif,serif;color:#222">x</span>
<span class="t" style="left:834.5px;top:8.8px;font-size:19.0px;color:#222;font-weight:bold;transform:scaleX(0.948);">(</span><span class="t" style="left:850.0px;top:8.8px;font-size:19.0px;color:#222;font-weight:bold;transform:scaleX(0.948);">)</span>
<svg class="abs" style="left:840.0px;top:13.0px;" width="11" height="11" viewBox="0 0 11 11"><circle cx="4.300" cy="4.300" r="3.100" fill="none" stroke="#333" stroke-width="1.400"/><path d="M6.600 6.600l3.200 3.200" stroke="#333" stroke-width="1.600"/></svg>
<div class="abs" style="left:1694px;top:2px;width:161px;height:32px;background:#f0f0f0;border-radius:3px"></div>
<span class="t" style="left:1703.3px;top:10.8px;font-size:15.0px;color:#333;transform:scaleX(0.897);">Search tools...</span>
<div class="abs" style="left:1793.7px;top:10px;width:33px;height:17.500px;border:1px solid #999;border-radius:2px;background:#f6f6f6"></div>
<div class="abs" style="left:1827.5px;top:10px;width:16.500px;height:17.500px;border:1px solid #999;border-radius:2px;background:#f6f6f6"></div>
<span class="t" style="left:1797.0px;top:13.0px;font-size:11.5px;color:#333;transform:scaleX(1.085);font-family:Liberation Sans,DejaVu Sans,sans-serif;">alt/⌥</span>
<span class="t" style="left:1833.0px;top:12.2px;font-size:12.0px;color:#333;transform:scaleX(1.000);">c</span></div>
<div id="lcol"><svg class="abs" style="left:10.0px;top:8.0px;" width="20" height="20" viewBox="0 0 20 20"><circle cx="3.900" cy="4.700" r="3.100" fill="none" stroke="#2b2b2b" stroke-width="1.700"/><circle cx="3.900" cy="16.900" r="2.100" fill="#2b2b2b"/><circle cx="10.800" cy="9.700" r="1.900" fill="#2b2b2b"/><path d="M3.900 8v8M3.900 13.800c3.500-.3 5.800-.6 6.800-3.800" fill="none" stroke="#2b2b2b" stroke-width="1.700"/><path d="M10 3h10M14.200 8h5.800M14.200 13h5.800M10 18h10" stroke="#2b2b2b" stroke-width="2"/></svg>
<svg class="abs" style="left:10.0px;top:44.0px;" width="20" height="20" viewBox="0 0 20 20"><circle cx="6" cy="9.500" r="2.900" fill="#222"/><path d="M6 1v18" stroke="#222" stroke-width="1.600" stroke-dasharray="2 1.500"/><path d="M15 10.500v7.500M11.300 14.300h7.500" stroke="#1b5fb8" stroke-width="1.900"/></svg>
<svg class="abs" style="left:10.0px;top:77.0px;" width="20" height="20" viewBox="0 0 20 20"><ellipse cx="10" cy="8.500" rx="9.500" ry="6.800" fill="#2b2b2b"/><path d="M5 13l-2.500 5.500 7-4z" fill="#2b2b2b"/></svg>
<svg class="abs" style="left:10.0px;top:113.0px;" width="20" height="20" viewBox="0 0 20 20"><path d="M16.500 10v8h-13.500v-16h13.500v1" fill="none" stroke="#222" stroke-width="1.700"/><path d="M6 6.500h6M6 10h4.500M6 13.500h3" stroke="#222" stroke-width="1.400"/><path d="M11 14.500l.8-3 6-6.500 2.200 2-6 6.500z" fill="#222"/></svg>
<svg class="abs" style="left:10.0px;top:148.0px;" width="20" height="20" viewBox="0 0 20 20"><circle cx="11.500" cy="11.500" r="6.800" fill="none" stroke="#222" stroke-width="1.700"/><path d="M9.500 2h4M11.500 2v2.500M11.500 11.500l3-3.500" stroke="#222" stroke-width="1.700"/><path d="M0 8h4M1 11.500h3M2 15h3" stroke="#222" stroke-width="1.400"/></svg>
<svg class="abs" style="left:10.0px;top:183.0px;" width="20" height="20" viewBox="0 0 20 20"><circle cx="10" cy="9.500" r="8" fill="#fff" stroke="#222" stroke-width="3"/><path d="M10 4.500l4.300 2.500v5l-4.300 2.500-4.300-2.500v-5z" fill="#222"/><path d="M10 7l2.200 1.300v2.500l-2.200 1.300-2.200-1.300v-2.500z" fill="#fff"/><path d="M13 14l5 5" stroke="#222" stroke-width="3"/></svg>
<div class="abs" style="left:0;top:211px;width:40px;height:1px;background:#d6d6d6"></div>
<svg class="abs" style="left:10.0px;top:219.0px;" width="20" height="20" viewBox="0 0 20 20"><rect x="2.500" y="1.500" width="15" height="17" rx="1" fill="none" stroke="#222" stroke-width="1.500"/><path d="M10.500 5.500h5M10.500 10h5M10.500 14.500h5" stroke="#222" stroke-width="1.400"/><path d="M4.500 5.300l1.300 1.300 2.200-2.600M4.500 9.800l1.300 1.300 2.200-2.600M4.500 14.300l1.300 1.300 2.200-2.600" fill="none" stroke="#222" stroke-width="1.200"/></svg>
<svg class="abs" style="left:10.0px;top:1015.0px;" width="20" height="20" viewBox="0 0 20 20"><path d="M1 3.500h13v3.500h-9v6h-4z" fill="#2b2b2b"/><circle cx="12" cy="11.500" r="4.300" fill="#f6f6f6" stroke="#2b2b2b" stroke-width="1.800"/><path d="M15 14.500l4 4" stroke="#2b2b2b" stroke-width="2.200"/></svg></div>
<div id="panel"><div class="abs" style="left:0;top:190.9px;width:200px;height:24.6px;background:#edf1f6;border-bottom:1px solid #a9cbe6;"></div>
<div class="abs" style="left:0;top:372.9px;width:200px;height:24.6px;background:#e9eff5;border-bottom:1px solid #a9cbe6;"></div>
<div class="abs" style="left:0;top:764.0px;width:200px;height:23.8px;background:#acd8f0;"></div>
<svg class="abs" style="left:9.0px;top:16.0px;" width="18" height="18" viewBox="0 0 18 18"><path d="M1.500 2h15l-6 7v7.500l-3-2v-5.500z" fill="none" stroke="#222" stroke-width="1.500" stroke-linejoin="round"/></svg>
<div class="abs" style="left:39px;top:8px;width:158px;height:29.500px;border:1px solid #8d8d8d;border-radius:3px;background:#fff"></div>
<span class="t" style="left:45.8px;top:18.1px;font-size:13.8px;color:#8a8a8a;font-style:italic;transform:scaleX(0.925);">Filter by name or type</span>
<span class="t" style="left:4.5px;top:46.1px;font-size:15.0px;color:#2b2b2b;transform:scaleX(0.885);-webkit-text-stroke:0.35px #2b2b2b;">Features (23)</span>
<svg class="abs" style="left:104.0px;top:44.0px;" width="20" height="20" viewBox="0 0 20 20"><path d="M3.500 5.500v-3.500h5l1.500 2h9v12h-11" fill="none" stroke="#222" stroke-width="1.300" stroke-linejoin="round"/><path d="M4.500 7v8M.5 11h8" stroke="#1b5fb8" stroke-width="1.900"/></svg>
<div class="abs" style="left:139.5px;top:47.3px;width:3.800px;height:13.500px;background:#222;box-shadow:7.500px 0 0 #222"></div>
<svg class="abs" style="left:165.0px;top:44.0px;" width="20" height="20" viewBox="0 0 20 20"><circle cx="10" cy="11" r="6.800" fill="none" stroke="#222" stroke-width="1.700"/><path d="M8 2h4M10 2v2.500M10 11l3 3.500" stroke="#222" stroke-width="1.700"/><path d="M15.500 4.500l1.500 1.500" stroke="#222" stroke-width="1.500"/></svg>
<div class="abs" style="left:9px;top:84px;width:1px;height:106px;background:#d0d0d0"></div>
<div class="abs" style="left:9px;top:216px;width:1px;height:207px;background:#d0d0d0"></div>
<div class="abs" style="left:9px;top:502px;width:1px;height:130px;background:#d0d0d0"></div>
<div class="abs" style="left:5px;top:189.7px;width:9px;height:1px;background:#d0d0d0"></div>
<div class="abs" style="left:5px;top:423.3px;width:9px;height:1px;background:#d0d0d0"></div>
<div class="abs" style="left:0px;top:632.0px;width:200px;height:1px;background:#d4d4d4"></div>
<svg class="abs" style="left:24.5px;top:64.5px;" width="16" height="16" viewBox="0 0 16 16"><path d="M1 2.500h4.500l1.300 1.800h8.700v9.200h-14.500z" fill="#fff" stroke="#555" stroke-width="1.100" stroke-linejoin="round"/></svg>
<span class="t" style="left:46.0px;top:65.3px;font-size:15.0px;color:#333;transform:scaleX(0.863);">Tubes (4)</span>
<svg class="abs" style="left:3.0px;top:66.3px;" width="14" height="14" viewBox="0 0 14 14"><path d="M2 4.500l5 5 5-5" fill="none" stroke="#333" stroke-width="1.700"/></svg>
<svg class="abs" style="left:24.5px;top:90.5px;" width="16" height="16" viewBox="0 0 16 16"><path d="M1.500 1.500l12 2v11l-12-2z" fill="#e2e2e2" stroke="#b5b5b5" stroke-width="1" stroke-linejoin="round"/><path d="M7.500 2.600l6 1v5l-6-.8z" fill="#fff" stroke="#b5b5b5" stroke-width=".8"/></svg>
<span class="t" style="left:45.3px;top:91.3px;font-size:15.0px;color:#a6a6a6;transform:scaleX(0.877);">Offset Plate</span>
<svg class="abs" style="left:24.5px;top:116.5px;" width="16" height="16" viewBox="0 0 16 16"><path d="M3 11l7.500-8.500 2.300 2-7.500 8.500-3.200 1.300z" fill="#fff" stroke="#b5b5b5" stroke-width="1" stroke-linejoin="round"/><path d="M1 15.500h13" stroke="#7f9fd0" stroke-width="1"/></svg>
<span class="t" style="left:45.3px;top:117.3px;font-size:15.0px;color:#a6a6a6;transform:scaleX(0.864);">Tube Sketch</span>
<svg class="abs" style="left:24.5px;top:142.5px;" width="16" height="16" viewBox="0 0 16 16"><path d="M1 1h10.500l3 3v11h-10.500l-3-3z" fill="#fff" stroke="#333" stroke-width="1" stroke-linejoin="round"/><path d="M1 1l3 3h10.500M4 4v11" fill="none" stroke="#333" stroke-width=".9"/><path d="M6.500 7h8v8h-8z" fill="#8a8a8a" stroke="#555" stroke-width=".8"/></svg>
<span class="t" style="left:45.3px;top:143.3px;font-size:15.0px;color:#2b2b2b;transform:scaleX(0.868);">Tube Extrude</span>
<svg class="abs" style="left:24.5px;top:168.5px;" width="16" height="16" viewBox="0 0 16 16"><path d="M1 2.500l4-1.500 9.500 1.500v11l-4 1.500-9.500-1.500z" fill="#9a9a9a" stroke="#333" stroke-width="1" stroke-linejoin="round"/><path d="M1 2.500l9.500 1.500v11M10.500 4l4-1.500" fill="none" stroke="#333" stroke-width=".8"/><path d="M1.500 3.300l8.500 1.300v9.800l-8.500-1.300z" fill="#fff"/><circle cx="3.800" cy="6" r="1" fill="#333"/><circle cx="7.300" cy="6.600" r="1" fill="#333"/><circle cx="3.800" cy="9" r="1" fill="#333"/><circle cx="7.300" cy="9.600" r="1" fill="#333"/><circle cx="3.800" cy="12" r="1" fill="#333"/><circle cx="7.300" cy="12.600" r="1" fill="#333"/></svg>
<span class="t" style="left:45.3px;top:169.3px;font-size:15.0px;color:#2b2b2b;transform:scaleX(0.862);">2x1 Convert</span>
<svg class="abs" style="left:151.0px;top:167.8px;" width="18" height="18" viewBox="0 0 18 18"><circle cx="9" cy="9" r="3.100" fill="#262626"/><path d="M8 0.200h2v1.700h-2zM8 2.900h2v1.700h-2zM8 13.400h2v1.700h-2zM8 16.100h2v1.700h-2z" fill="#262626"/></svg>
<svg class="abs" style="left:24.5px;top:194.5px;" width="16" height="16" viewBox="0 0 16 16"><path d="M1 2.500h4.500l1.300 1.800h8.700v9.200h-14.500z" fill="#fff" stroke="#555" stroke-width="1.100" stroke-linejoin="round"/></svg>
<span class="t" style="left:46.0px;top:195.3px;font-size:15.0px;color:#333;transform:scaleX(0.866);">Plates (7)</span>
<svg class="abs" style="left:3.0px;top:196.3px;" width="14" height="14" viewBox="0 0 14 14"><path d="M2 4.500l5 5 5-5" fill="none" stroke="#333" stroke-width="1.700"/></svg>
<svg class="abs" style="left:24.5px;top:220.5px;" width="16" height="16" viewBox="0 0 16 16"><path d="M3 11l7.500-8.500 2.300 2-7.500 8.500-3.200 1.300z" fill="#fff" stroke="#333" stroke-width="1" stroke-linejoin="round"/><path d="M1 15.500h13" stroke="#7f9fd0" stroke-width="1"/></svg>
<span class="t" style="left:45.3px;top:221.3px;font-size:15.0px;color:#2b2b2b;transform:scaleX(0.873);">Layout Sketch</span>
<svg class="abs" style="left:24.5px;top:246.5px;" width="16" height="16" viewBox="0 0 16 16"><path d="M3 11l7.500-8.500 2.300 2-7.500 8.500-3.200 1.300z" fill="#fff" stroke="#b5b5b5" stroke-width="1" stroke-linejoin="round"/><path d="M1 15.500h13" stroke="#7f9fd0" stroke-width="1"/></svg>
<span class="t" style="left:45.3px;top:247.3px;font-size:15.0px;color:#a6a6a6;transform:scaleX(0.862);">Outer Plate Sk</span>
<svg class="abs" style="left:24.5px;top:272.5px;" width="16" height="16" viewBox="0 0 16 16"><path d="M1 1h10.500l3 3v11h-10.500l-3-3z" fill="#fff" stroke="#333" stroke-width="1" stroke-linejoin="round"/><path d="M1 1l3 3h10.500M4 4v11" fill="none" stroke="#333" stroke-width=".9"/><path d="M6.500 7h8v8h-8z" fill="#8a8a8a" stroke="#555" stroke-width=".8"/></svg>
<span class="t" style="left:45.3px;top:273.3px;font-size:15.0px;color:#2b2b2b;transform:scaleX(0.870);">Outer Plate</span>
<svg class="abs" style="left:24.5px;top:298.5px;" width="16" height="16" viewBox="0 0 16 16"><path d="M3 11l7.500-8.500 2.300 2-7.500 8.500-3.200 1.300z" fill="#fff" stroke="#b5b5b5" stroke-width="1" stroke-linejoin="round"/><path d="M1 15.500h13" stroke="#7f9fd0" stroke-width="1"/></svg>
<span class="t" style="left:45.3px;top:299.3px;font-size:15.0px;color:#a6a6a6;transform:scaleX(0.862);">Inner Plate Sk</span>
<svg class="abs" style="left:24.5px;top:324.5px;" width="16" height="16" viewBox="0 0 16 16"><path d="M1 1h10.500l3 3v11h-10.500l-3-3z" fill="#fff" stroke="#333" stroke-width="1" stroke-linejoin="round"/><path d="M1 1l3 3h10.500M4 4v11" fill="none" stroke="#333" stroke-width=".9"/><path d="M6.500 7h8v8h-8z" fill="#8a8a8a" stroke="#555" stroke-width=".8"/></svg>
<span class="t" style="left:45.3px;top:325.3px;font-size:15.0px;color:#2b2b2b;transform:scaleX(0.874);">Inner Plate</span>
<svg class="abs" style="left:24.5px;top:350.5px;" width="16" height="16" viewBox="0 0 16 16"><path d="M3 11l7.500-8.500 2.300 2-7.500 8.500-3.200 1.300z" fill="#fff" stroke="#b5b5b5" stroke-width="1" stroke-linejoin="round"/><path d="M1 15.500h13" stroke="#7f9fd0" stroke-width="1"/></svg>
<span class="t" style="left:45.3px;top:351.3px;font-size:15.0px;color:#a6a6a6;transform:scaleX(0.870);">Crush Plate</span>
<svg class="abs" style="left:24.5px;top:376.5px;" width="16" height="16" viewBox="0 0 16 16"><path d="M1 1h10.500l3 3v11h-10.500l-3-3z" fill="#fff" stroke="#333" stroke-width="1" stroke-linejoin="round"/><path d="M1 1l3 3h10.500M4 4v11" fill="none" stroke="#333" stroke-width=".9"/><path d="M6.500 7h8v8h-8z" fill="#8a8a8a" stroke="#555" stroke-width=".8"/></svg>
<span class="t" style="left:45.3px;top:377.3px;font-size:15.0px;color:#2b2b2b;transform:scaleX(0.870);">Crush Plate</span>
<svg class="abs" style="left:3.5px;top:427.5px;" width="18" height="18" viewBox="0 0 16 16"><path d="M1.500 6.500l13-1.200.8 7.700-13.300 1.600z" fill="#9a9a9a"/><circle cx="5.600" cy="9.800" r="1.900" fill="#fff"/><circle cx="10.600" cy="9.200" r="1.900" fill="#fff"/><circle cx="6" cy="10.100" r=".9" fill="#9a9a9a"/><circle cx="11" cy="9.500" r=".9" fill="#9a9a9a"/><path d="M8 5.500v-3.500" stroke="#9a9a9a" stroke-width="1.100"/><circle cx="8" cy="2" r="1" fill="#9a9a9a"/><path d="M4 1.500l1.200 2M5.200 1.500l-1.200 2M11 1.500l1.200 2M12.200 1.500l-1.200 2" stroke="#aaa" stroke-width=".7"/></svg>
<span class="t" style="left:26.7px;top:429.3px;font-size:15.0px;color:#8f8f8f;font-style:italic;transform:scaleX(0.880);">First Stage Shaft</span>
<svg class="abs" style="left:151.0px;top:427.8px;" width="18" height="18" viewBox="0 0 18 18"><circle cx="9" cy="9" r="3.100" fill="#262626"/><path d="M8 0.200h2v1.700h-2zM8 2.900h2v1.700h-2zM8 13.400h2v1.700h-2zM8 16.100h2v1.700h-2z" fill="#262626"/></svg>
<svg class="abs" style="left:3.5px;top:453.5px;" width="18" height="18" viewBox="0 0 16 16"><path d="M1.500 6.500l13-1.200.8 7.700-13.300 1.600z" fill="#9a9a9a"/><circle cx="5.600" cy="9.800" r="1.900" fill="#fff"/><circle cx="10.600" cy="9.200" r="1.900" fill="#fff"/><circle cx="6" cy="10.100" r=".9" fill="#9a9a9a"/><circle cx="11" cy="9.500" r=".9" fill="#9a9a9a"/><path d="M8 5.500v-3.500" stroke="#9a9a9a" stroke-width="1.100"/><circle cx="8" cy="2" r="1" fill="#9a9a9a"/><path d="M4 1.500l1.200 2M5.200 1.500l-1.200 2M11 1.500l1.200 2M12.200 1.500l-1.200 2" stroke="#aaa" stroke-width=".7"/></svg>
<span class="t" style="left:26.7px;top:455.3px;font-size:15.0px;color:#8f8f8f;font-style:italic;transform:scaleX(0.886);">Output Shaft</span>
<svg class="abs" style="left:151.0px;top:453.8px;" width="18" height="18" viewBox="0 0 18 18"><circle cx="9" cy="9" r="3.100" fill="#262626"/><path d="M8 0.200h2v1.700h-2zM8 2.900h2v1.700h-2zM8 13.400h2v1.700h-2zM8 16.100h2v1.700h-2z" fill="#262626"/></svg>
<svg class="abs" style="left:24.5px;top:480.5px;" width="16" height="16" viewBox="0 0 16 16"><path d="M1 2.500h4.500l1.300 1.800h8.700v9.200h-14.500z" fill="#fff" stroke="#b5b5b5" stroke-width="1.100" stroke-linejoin="round"/></svg>
<span class="t" style="left:46.8px;top:481.3px;font-size:15.0px;color:#8f8f8f;font-style:italic;transform:scaleX(0.863);">Pocketing (5)</span>
<svg class="abs" style="left:3.0px;top:482.3px;" width="14" height="14" viewBox="0 0 14 14"><path d="M2 4.500l5 5 5-5" fill="none" stroke="#333" stroke-width="1.700"/></svg>
<svg class="abs" style="left:24.5px;top:506.5px;" width="16" height="16" viewBox="0 0 16 16"><path d="M3 11l7.500-8.500 2.300 2-7.500 8.500-3.200 1.300z" fill="#fff" stroke="#b5b5b5" stroke-width="1" stroke-linejoin="round"/><path d="M1 15.500h13" stroke="#7f9fd0" stroke-width="1"/></svg>
<span class="t" style="left:45.7px;top:507.3px;font-size:15.0px;color:#8f8f8f;font-style:italic;transform:scaleX(0.874);">Outer Plate</span>
<svg class="abs" style="left:24.5px;top:532.5px;" width="16" height="16" viewBox="0 0 16 16"><circle cx="8" cy="8" r="4.500" fill="none" stroke="#b5b5b5" stroke-width="2.600"/><path d="M1 1.500h4M11 1.500h4M1 14.800h14" stroke="#b5b5b5" stroke-width="2"/><path d="M2.500 2l3 3.500M13.500 2l-3 3.500M3 14.500l2.500-3.500M13 14.500l-2.500-3.500" stroke="#b5b5b5" stroke-width="2"/></svg>
<span class="t" style="left:45.7px;top:533.3px;font-size:15.0px;color:#8f8f8f;font-style:italic;transform:scaleX(0.862);">Part Lightening...</span>
<svg class="abs" style="left:151.0px;top:531.8px;" width="18" height="18" viewBox="0 0 18 18"><circle cx="9" cy="9" r="3.100" fill="#262626"/><path d="M8 0.200h2v1.700h-2zM8 2.900h2v1.700h-2zM8 13.400h2v1.700h-2zM8 16.100h2v1.700h-2z" fill="#262626"/></svg>
<svg class="abs" style="left:24.5px;top:558.5px;" width="16" height="16" viewBox="0 0 16 16"><path d="M3 11l7.500-8.500 2.300 2-7.500 8.500-3.200 1.300z" fill="#fff" stroke="#b5b5b5" stroke-width="1" stroke-linejoin="round"/><path d="M1 15.500h13" stroke="#7f9fd0" stroke-width="1"/></svg>
<span class="t" style="left:45.7px;top:559.3px;font-size:15.0px;color:#8f8f8f;font-style:italic;transform:scaleX(0.878);">Inner Plate</span>
<svg class="abs" style="left:24.5px;top:584.5px;" width="16" height="16" viewBox="0 0 16 16"><circle cx="8" cy="8" r="4.500" fill="none" stroke="#b5b5b5" stroke-width="2.600"/><path d="M1 1.500h4M11 1.500h4M1 14.800h14" stroke="#b5b5b5" stroke-width="2"/><path d="M2.500 2l3 3.500M13.500 2l-3 3.500M3 14.500l2.500-3.500M13 14.500l-2.500-3.500" stroke="#b5b5b5" stroke-width="2"/></svg>
<span class="t" style="left:45.7px;top:585.3px;font-size:15.0px;color:#8f8f8f;font-style:italic;transform:scaleX(0.862);">Part Lightening...</span>
<svg class="abs" style="left:151.0px;top:583.8px;" width="18" height="18" viewBox="0 0 18 18"><circle cx="9" cy="9" r="3.100" fill="#262626"/><path d="M8 0.200h2v1.700h-2zM8 2.900h2v1.700h-2zM8 13.400h2v1.700h-2zM8 16.100h2v1.700h-2z" fill="#262626"/></svg>
<svg class="abs" style="left:24.5px;top:610.5px;" width="16" height="16" viewBox="0 0 16 16"><path d="M8 1l6 3v7.500l-6 3.500-6-3.500v-7.500z" fill="#cfcfcf" stroke="#bdbdbd" stroke-width=".8"/><path d="M5.500 5.500h5v6h-5z" fill="#e8e8e8" stroke="#aaa" stroke-width=".7"/><path d="M5.500 7.500h5M5.500 9.500h5" stroke="#b5b5b5" stroke-width=".6"/></svg>
<span class="t" style="left:45.7px;top:611.3px;font-size:15.0px;color:#8f8f8f;font-style:italic;transform:scaleX(0.877);">Fillet Plate Cor...</span>
<svg class="abs" style="left:151.0px;top:609.8px;" width="18" height="18" viewBox="0 0 18 18"><circle cx="9" cy="9" r="3.100" fill="#262626"/><path d="M8 0.200h2v1.700h-2zM8 2.900h2v1.700h-2zM8 13.400h2v1.700h-2zM8 16.100h2v1.700h-2z" fill="#262626"/></svg>
<span class="t" style="left:23.0px;top:638.3px;font-size:15.0px;color:#333;transform:scaleX(0.869);">Parts (5)</span>
<svg class="abs" style="left:3.0px;top:639.3px;" width="14" height="14" viewBox="0 0 14 14"><path d="M2 4.500l5 5 5-5" fill="none" stroke="#333" stroke-width="1.700"/></svg>
<svg class="abs" style="left:24.5px;top:663.5px;" width="16" height="16" viewBox="0 0 16 16"><path d="M1.500 8h5v-5l2-1.800h5v10.800l-2 2.500h-10z" fill="#fff" stroke="#b5b5b5" stroke-width="1.100" stroke-linejoin="round"/><path d="M1.500 8l0 0M6.500 8l2-1.800v-5M8.500 6.200h3v6l-2 2.300M11.500 12.200l2-.2" fill="none" stroke="#b5b5b5" stroke-width=".8"/></svg>
<span class="t" style="left:45.3px;top:664.3px;font-size:15.0px;color:#a6a6a6;transform:scaleX(0.843);">Origin Cube</span>
<svg class="abs" style="left:24.5px;top:689.5px;" width="16" height="16" viewBox="0 0 16 16"><path d="M1.500 8h5v-5l2-1.800h5v10.800l-2 2.500h-10z" fill="#fff" stroke="#333" stroke-width="1.100" stroke-linejoin="round"/><path d="M1.500 8l0 0M6.500 8l2-1.800v-5M8.500 6.200h3v6l-2 2.300M11.500 12.200l2-.2" fill="none" stroke="#333" stroke-width=".8"/></svg>
<span class="t" style="left:45.3px;top:690.3px;font-size:15.0px;color:#2b2b2b;transform:scaleX(0.871);">Tube 2&quot;x1&quot;x16&quot;</span>
<svg class="abs" style="left:24.5px;top:715.5px;" width="16" height="16" viewBox="0 0 16 16"><path d="M1.500 8h5v-5l2-1.800h5v10.800l-2 2.500h-10z" fill="#fff" stroke="#333" stroke-width="1.100" stroke-linejoin="round"/><path d="M1.500 8l0 0M6.500 8l2-1.800v-5M8.500 6.200h3v6l-2 2.300M11.500 12.200l2-.2" fill="none" stroke="#333" stroke-width=".8"/></svg>
<span class="t" style="left:45.3px;top:716.3px;font-size:15.0px;color:#2b2b2b;transform:scaleX(0.857);">Large Gearbox Plate</span>
<svg class="abs" style="left:24.5px;top:741.5px;" width="16" height="16" viewBox="0 0 16 16"><path d="M1.500 8h5v-5l2-1.800h5v10.800l-2 2.500h-10z" fill="#fff" stroke="#333" stroke-width="1.100" stroke-linejoin="round"/><path d="M1.500 8l0 0M6.500 8l2-1.800v-5M8.500 6.200h3v6l-2 2.300M11.500 12.200l2-.2" fill="none" stroke="#333" stroke-width=".8"/></svg>
<span class="t" style="left:45.3px;top:742.3px;font-size:15.0px;color:#2b2b2b;transform:scaleX(0.868);">Small Gearbox Plate</span>
<svg class="abs" style="left:24.5px;top:767.5px;" width="16" height="16" viewBox="0 0 16 16"><path d="M1.500 8h5v-5l2-1.800h5v10.800l-2 2.500h-10z" fill="#fff" stroke="#333" stroke-width="1.100" stroke-linejoin="round"/><path d="M1.500 8l0 0M6.500 8l2-1.800v-5M8.500 6.200h3v6l-2 2.300M11.500 12.200l2-.2" fill="none" stroke="#333" stroke-width=".8"/></svg>
<span class="t" style="left:45.3px;top:768.3px;font-size:15.0px;color:#2b2b2b;transform:scaleX(0.870);">Crush Plate</span>
<div class="abs" style="left:22px;top:60.4px;width:23px;height:8px;background:#fff"></div>
<div class="abs" style="left:24px;top:408px;width:171px;height:7px;background:#b6b6b6"></div></div>
<div id="tabs"><svg class="abs" style="left:8.5px;top:6.3px;" width="16" height="16" viewBox="0 0 16 16"><path d="M8 0.500v15M0.500 8h15" stroke="#4a4a4a" stroke-width="2.400"/></svg>
<div class="abs" style="left:35px;top:1px;width:40px;height:28px;background:#e9e9e9"></div>
<svg class="abs" style="left:41.0px;top:3.5px;" width="20" height="20" viewBox="0 0 20 20"><path d="M1 10l9-8.500 3.500 3.300v-2.300h3v5.100l2.500 2.400h-2.500v8.500h-4.500v-5.500h-3.500v5.500h-4.500v-8.500z" fill="#555"/></svg>
<svg class="abs" style="left:68px;top:0" width="150" height="29" viewBox="0 0 150 29"><path d="M0 1h127l10 14-10 14h-127l10-14z" fill="#fff"/><path d="M0 1l10 14-10 14" fill="none" stroke="#d0d0d0" stroke-width="1"/></svg>
<div class="abs" style="left:89px;top:0;width:96.3px;height:29px;overflow:hidden"><span class="t" style="left:0.9px;top:6.3px;font-size:14.5px;color:#666;transform:scaleX(0.958);">Exercise 5 - Flip</span></div>
<div class="abs" style="left:207.5px;top:1px;width:200px;height:28px;background:#e4e4e4;border-radius:3px 3px 0 0"></div>
<svg class="abs" style="left:220.0px;top:6.0px;" width="14" height="14" viewBox="0 0 14 14"><circle cx="7" cy="7" r="6.300" fill="#6aa5de"/><circle cx="7" cy="3.800" r="1.300" fill="#fff"/><path d="M5.800 6.200h2.400v5h-2.400z" fill="#fff"/></svg>
<svg class="abs" style="left:238.5px;top:4.5px;" width="17" height="17" viewBox="0 0 17 17"><path d="M1.500 3l3-2h11v12l-3 3h-11z" fill="#fff" stroke="#333" stroke-width="1.100" stroke-linejoin="round"/><path d="M5 5h8.500v9h-8.500z" fill="#777"/><path d="M1.500 3h11v13M12.500 3l3-2" fill="none" stroke="#333" stroke-width=".9"/></svg>
<span class="t" style="left:259.9px;top:6.8px;font-size:14.5px;color:#666;transform:scaleX(0.958);">Exercise 5 Assembly</span>
<div class="abs" style="left:410px;top:1px;width:199px;height:28px;background:#fff;border-bottom:2px solid #1b5fb8;border-radius:3px 3px 0 0"></div>
<svg class="abs" style="left:419.5px;top:4.0px;" width="19" height="19" viewBox="0 0 19 19"><path d="M1.500 5l2.500-1.500h3v14h-3l-2.500-1.500z" fill="#fff" stroke="#222" stroke-width="1.100" stroke-linejoin="round"/><path d="M9.500 2.500l2.500-1.500h3l2 1.500v14.500h-7.500z" fill="#fff" stroke="#222" stroke-width="1.100" stroke-linejoin="round"/><path d="M4 3.500v14M12 1v16" stroke="#222" stroke-width=".8"/></svg>
<span class="t" style="left:441.6px;top:6.8px;font-size:14.5px;color:#222;transform:scaleX(0.946);">Exercise 5 Part Studio</span></div>
<svg class="abs" style="left:1740px;top:80px;z-index:4" width="179" height="180" viewBox="1740 80 179 180">
<g fill="#9c9c9c"><path d="M1830 91.500l7.500 9.500h-15z"/><path d="M1830 240.500l7.500-9.500h-15z"/><path d="M1755.500 166l9.500-7.500v15z"/><path d="M1904.500 166l-9.500-7.500v15z"/></g>
<g fill="none" stroke="#9c9c9c" stroke-width="4"><path d="M1809 102c-11 4-20 10-27 18"/><path d="M1851 102c11 4 20 10 27 18"/></g>
<path d="M1776 125l1.500-11.500 9.500 8.500z M1776 125l11-1.500-2.500-8z" fill="#9c9c9c"/><path d="M1776 125.500l0.500-12 10.500 10.500z" fill="#9c9c9c"/>
<path d="M1884 125.500l-0.500-12-10.500 10.500z" fill="#9c9c9c"/>
<path d="M1825 124.500l44 22v41.500l-28 24.500-50-21.500v-42.500z" fill="#e7edf1" stroke="#edf1f4" stroke-width="3" stroke-linejoin="round"/>
<g fill="#fcfdfd" stroke="#fcfdfd" stroke-width="5" stroke-linejoin="round"><path d="M1798 159.500l33 6v32l-33-13.500z"/><path d="M1848 164l17-10v28l-17 15z"/><path d="M1806 146l20-12.500 30 13.500-18 5z"/></g>
<path d="M1841 212.500v-50" stroke="#5a5ad8" stroke-width="1.500"/><path d="M1841 212.500l29-24" stroke="#d03030" stroke-width="1.500"/><path d="M1841 212.500l-51-14.500" stroke="#2aa02a" stroke-width="1.500"/>
<g font-family="Liberation Sans,sans-serif">
<text x="1836.500" y="158" font-size="12" fill="#6a6ae0">Z</text><text x="1871" y="188" font-size="12" fill="#cc2020">X</text><text x="1776.500" y="200" font-size="12" fill="#1f9a1f">Y</text>
<text x="1815" y="182.500" text-anchor="middle" font-size="12" fill="#1a1a1a" transform="rotate(12 1815 178.500)" textLength="19" lengthAdjust="spacingAndGlyphs">Left</text>
<text x="1855.500" y="177" text-anchor="middle" font-size="9.500" font-style="italic" fill="#3a3a3a" transform="rotate(-57 1855.500 174)" textLength="19" lengthAdjust="spacingAndGlyphs">Front</text>
<text x="1828.500" y="144" text-anchor="middle" font-size="8.500" fill="#333" transform="rotate(-32 1828.500 141)" textLength="14" lengthAdjust="spacingAndGlyphs">Top</text></g>
<path d="M1875 223l8.500 3v9.500l-8.500 4-8.500-4v-9.500z" fill="#f4f4f4" stroke="#333" stroke-width="1.100" stroke-linejoin="round"/><path d="M1866.500 226l8.500 3.500v10M1875 229.500l8.500-3.500" fill="none" stroke="#333" stroke-width=".9"/><path d="M1866.500 226l8.500 3.500v10l-8.500-4z" fill="#b5b5b5"/><path d="M1875 229.500l8.500-3.500v9.500l-8.500 4z" fill="#e2e2e2"/>
<path d="M1891.500 229.500h8.500l-4.250 4.500z" fill="#222"/>
</svg>
<div class="abs" style="left:1888px;top:400px;width:32px;height:134px;background:#fff;border:1px solid #c8c8c8;border-right:0;z-index:4"><div class="abs" style="left:0;top:0.0px;width:31px;height:33px;border-bottom:1px solid #c8c8c8"><svg class="abs" style="left:5.0px;top:5.5px" width="22" height="22" viewBox="0 0 22 22"><path d="M3 14l7-11 4 2 3 3 2 6z" fill="#9a9a9a"/><path d="M10 3l-3 11M14 5l-3 9M17 8l-2 6" stroke="#777" stroke-width=".8"/><rect x="1" y="14" width="20" height="6" rx="1" fill="#e4e4e4" stroke="#888" stroke-width=".9"/><circle cx="5" cy="17" r="1.600" fill="#fff" stroke="#666" stroke-width=".7"/><rect x="9" y="15.300" width="10" height="3.400" fill="#fff"/></svg></div><div class="abs" style="left:0;top:33.0px;width:31px;height:33px;border-bottom:1px solid #c8c8c8"><svg class="abs" style="left:5.0px;top:5.5px" width="22" height="22" viewBox="0 0 22 22"><g fill="#2a66c0"><rect x="1" y="1" width="3" height="3"/><rect x="5" y="1" width="3" height="3"/><rect x="9" y="1" width="3" height="3"/><rect x="1" y="5" width="3" height="3"/><rect x="5" y="5" width="3" height="3"/><rect x="9" y="5" width="3" height="3"/></g><path d="M13 6l7.500 3v8l-7.500 4-6.500-4v-7z" fill="#fff" stroke="#222" stroke-width="1.200" stroke-linejoin="round"/><path d="M6.500 10l6.500 3.500 7.500-4.500M13 13.500v7.500" fill="none" stroke="#222" stroke-width="1"/></svg></div><div class="abs" style="left:0;top:66.0px;width:31px;height:33px;border-bottom:1px solid #c8c8c8"><svg class="abs" style="left:5.0px;top:5.5px" width="22" height="22" viewBox="0 0 22 22"><g fill="#333"><rect x="1" y="1" width="3" height="3"/><rect x="5" y="1" width="3" height="3"/><rect x="9" y="1" width="3" height="3"/><rect x="1" y="5" width="3" height="3"/><rect x="5" y="5" width="3" height="3"/><rect x="9" y="5" width="3" height="3"/></g><path d="M5 9c-2 0-1.500 2-1.500 3.500s-.5 2-1.500 2c1 0 1.500.5 1.500 2s-.5 3.500 1.500 3.500M17 9c2 0 1.500 2 1.500 3.500s.5 2 1.500 2c-1 0-1.500.5-1.500 2s.5 3.500-1.500 3.500" fill="none" stroke="#333" stroke-width="1.100"/><path d="M11.500 9l5 2v5l-5 2.500-4.500-2.500v-4.500z" fill="#ddd" stroke="#444" stroke-width=".9"/></svg></div><div class="abs" style="left:0;top:99.0px;width:31px;height:33px;border-bottom:1px solid #c8c8c8"><svg class="abs" style="left:5.0px;top:5.5px" width="22" height="22" viewBox="0 0 22 22"><g fill="#333"><rect x="1" y="1" width="3" height="3"/><rect x="5" y="1" width="3" height="3"/><rect x="9" y="1" width="3" height="3"/><rect x="1" y="5" width="3" height="3"/><rect x="5" y="5" width="3" height="3"/><rect x="9" y="5" width="3" height="3"/></g><text x="8" y="19" font-family="Liberation Serif,serif" font-style="italic" font-weight="bold" font-size="15" fill="#111">x</text><path d="M5 8c-3 4-3 9 0 13M18 8c3 4 3 9 0 13" fill="none" stroke="#222" stroke-width="1.600"/></svg></div></div>
<div class="abs" style="left:1888px;top:543px;width:32px;height:167px;background:#fff;border:1px solid #c8c8c8;border-right:0;z-index:4"><div class="abs" style="left:0;top:0.0px;width:31px;height:33px;border-bottom:1px solid #c8c8c8"><svg class="abs" style="left:5.0px;top:5.5px" width="22" height="22" viewBox="0 0 22 22"><rect x="0" y="0" width="22" height="22" rx="2.500" fill="#e1e1e1"/><path d="M11 11c-2-5-6-8-9-7 0 4 3 6 7 7-3 1-5 3-4 7 3 0 5-3 6-6 1 3 3 6 6 6 1-4-1-6-4-7 4-1 7-3 7-7-3-1-7 2-9 7z" fill="#0a0a0a"/></svg></div><div class="abs" style="left:0;top:33.0px;width:31px;height:33px;border-bottom:1px solid #c8c8c8"><svg class="abs" style="left:5.0px;top:5.5px" width="22" height="22" viewBox="0 0 22 22"><rect x="0" y="0" width="22" height="22" rx="2.500" fill="#e1e1e1"/><rect x="2" y="2.500" width="18" height="17" fill="#1b5fc0" stroke="#103a80" stroke-width="1"/><text x="11" y="16.500" text-anchor="middle" font-family="Liberation Serif,serif" font-weight="bold" font-size="14" fill="#fff" textLength="16" lengthAdjust="spacingAndGlyphs">MK</text></svg></div><div class="abs" style="left:0;top:66.0px;width:31px;height:33px;border-bottom:1px solid #c8c8c8"><svg class="abs" style="left:5.0px;top:5.5px" width="22" height="22" viewBox="0 0 22 22"><rect x="0" y="0" width="22" height="22" rx="2.500" fill="#dcdcdc"/><path d="M3 9l16-1.200.8 9-16.300 1.700z" fill="#2b2b2b"/><circle cx="7.800" cy="13" r="2.300" fill="#fff"/><circle cx="14" cy="12.300" r="2.300" fill="#fff"/><circle cx="8.300" cy="13.300" r="1.100" fill="#2a66c0"/><circle cx="14.500" cy="12.600" r="1.100" fill="#2a66c0"/><path d="M11 8v-4" stroke="#2b2b2b" stroke-width="1.200"/><circle cx="11" cy="3.800" r="1.200" fill="#2b2b2b"/><path d="M6 2.500l1.200 2M7.200 2.500l-1.200 2M14.500 2.500l1.200 2M15.700 2.500l-1.200 2" stroke="#2a66c0" stroke-width=".8"/><path d="M10 16.500c1.500.8 3 .3 4-1" stroke="#fff" stroke-width=".8" fill="none"/></svg></div><div class="abs" style="left:0;top:99.0px;width:31px;height:33px;border-bottom:1px solid #c8c8c8"><svg class="abs" style="left:5.0px;top:5.5px" width="22" height="22" viewBox="0 0 22 22"><rect x="0" y="0" width="22" height="22" rx="2.500" fill="#d6ead6"/><rect x="1.500" y="1.500" width="19" height="19" rx="1.500" fill="#55b455"/><path d="M4 6c2.500-1 5-1 7 .5 2-1.500 4.500-1.500 7-.5v10c-2.500-1-5-1-7 .5-2-1.500-4.500-1.500-7-.5z" fill="#fff"/><path d="M11 6.500v10" stroke="#55b455" stroke-width="1.200"/></svg></div><div class="abs" style="left:0;top:132.0px;width:31px;height:33px;border-bottom:1px solid #c8c8c8"><svg class="abs" style="left:5.0px;top:5.5px" width="22" height="22" viewBox="0 0 22 22"><rect x="0" y="0" width="22" height="22" rx="2.500" fill="#e1e1e1"/><rect x="2" y="2.500" width="18" height="17" fill="#1b5fc0" stroke="#103a80" stroke-width="1"/><path d="M4 6c2.500-1 5-1 7 .5 2-1.500 4.500-1.500 7-.5v10c-2.500-1-5-1-7 .5-2-1.500-4.500-1.500-7-.5z" fill="#fff"/><path d="M11 6.500v10" stroke="#1b5fc0" stroke-width="1.200"/></svg></div></div>
<div class="abs" style="left:1810px;top:1020px;width:109px;height:30px;background:rgba(255,255,255,0.77);z-index:4">
<svg class="abs" style="left:0;top:0" width="109" height="30" viewBox="0 0 109 30"><g fill="none" stroke="#333" stroke-width="1.300" stroke-linejoin="round">
<path d="M12 17h10.500c3.500 0 5.500-1 5.500-2.500v5c0 1.500-2 2.500-5.500 2.500h-10.500z" fill="#e8e8e8"/><ellipse cx="22.500" cy="13.500" rx="5.500" ry="3.200" fill="#e8e8e8"/><ellipse cx="22.500" cy="13.300" rx="2.600" ry="1.200"/><path d="M17 14v3.500" /><path d="M14.500 20v2M17 20v2M19.500 20v2M22 20v2M24.500 19.500v2" stroke-width=".8"/>
<path d="M45.500 22.500c0-6.500 4-11.500 9.500-11.500s9.500 5 9.500 11.500z" fill="#e8e8e8"/><path d="M50 22.500c0-3.500 2-5.500 5-5.500s5 2 5 5.500" /><path d="M48 22.300c.3-4.500 3-8.300 7-8.300s6.700 3.800 7 8.300" stroke-width=".7" stroke-dasharray="1 1"/>
<path d="M90.500 9.500v12M84 10h13" stroke-width="1.500"/><path d="M83 22.300h15" stroke-width="1.900"/><path d="M85 10.500l-2.300 7h4.600zM96 10.500l-2.300 7h4.600z" stroke-width=".9"/><path d="M82.300 18h5.400M93.300 18h5.400" stroke-width="1.800"/></g></svg>
</div>
<div class="abs" style="left:246px;top:537.700px;width:32px;height:33px;background:#fff;border:1px solid #c8c8c8;border-left:0;z-index:6">
<svg class="abs" style="left:5px;top:6px" width="22" height="20" viewBox="0 0 22 20"><path d="M7 3.500h13M7 8h13M7 12.500h13M7 17h13" stroke="#333" stroke-width="1.500"/><path d="M4 3v15" stroke="#333" stroke-width="1.400"/><path d="M1 2.500l3 2.500 3-2.500" fill="none" stroke="#333" stroke-width="1.300"/></svg></div>
<svg class="abs" style="left:1056px;top:1008px;z-index:4" width="12" height="12" viewBox="0 0 12 12"><circle cx="6" cy="6" r="4.300" fill="#fff" stroke="#111" stroke-width="1.400"/><circle cx="6" cy="6" r="1.500" fill="#111"/></svg>
</body></html>
